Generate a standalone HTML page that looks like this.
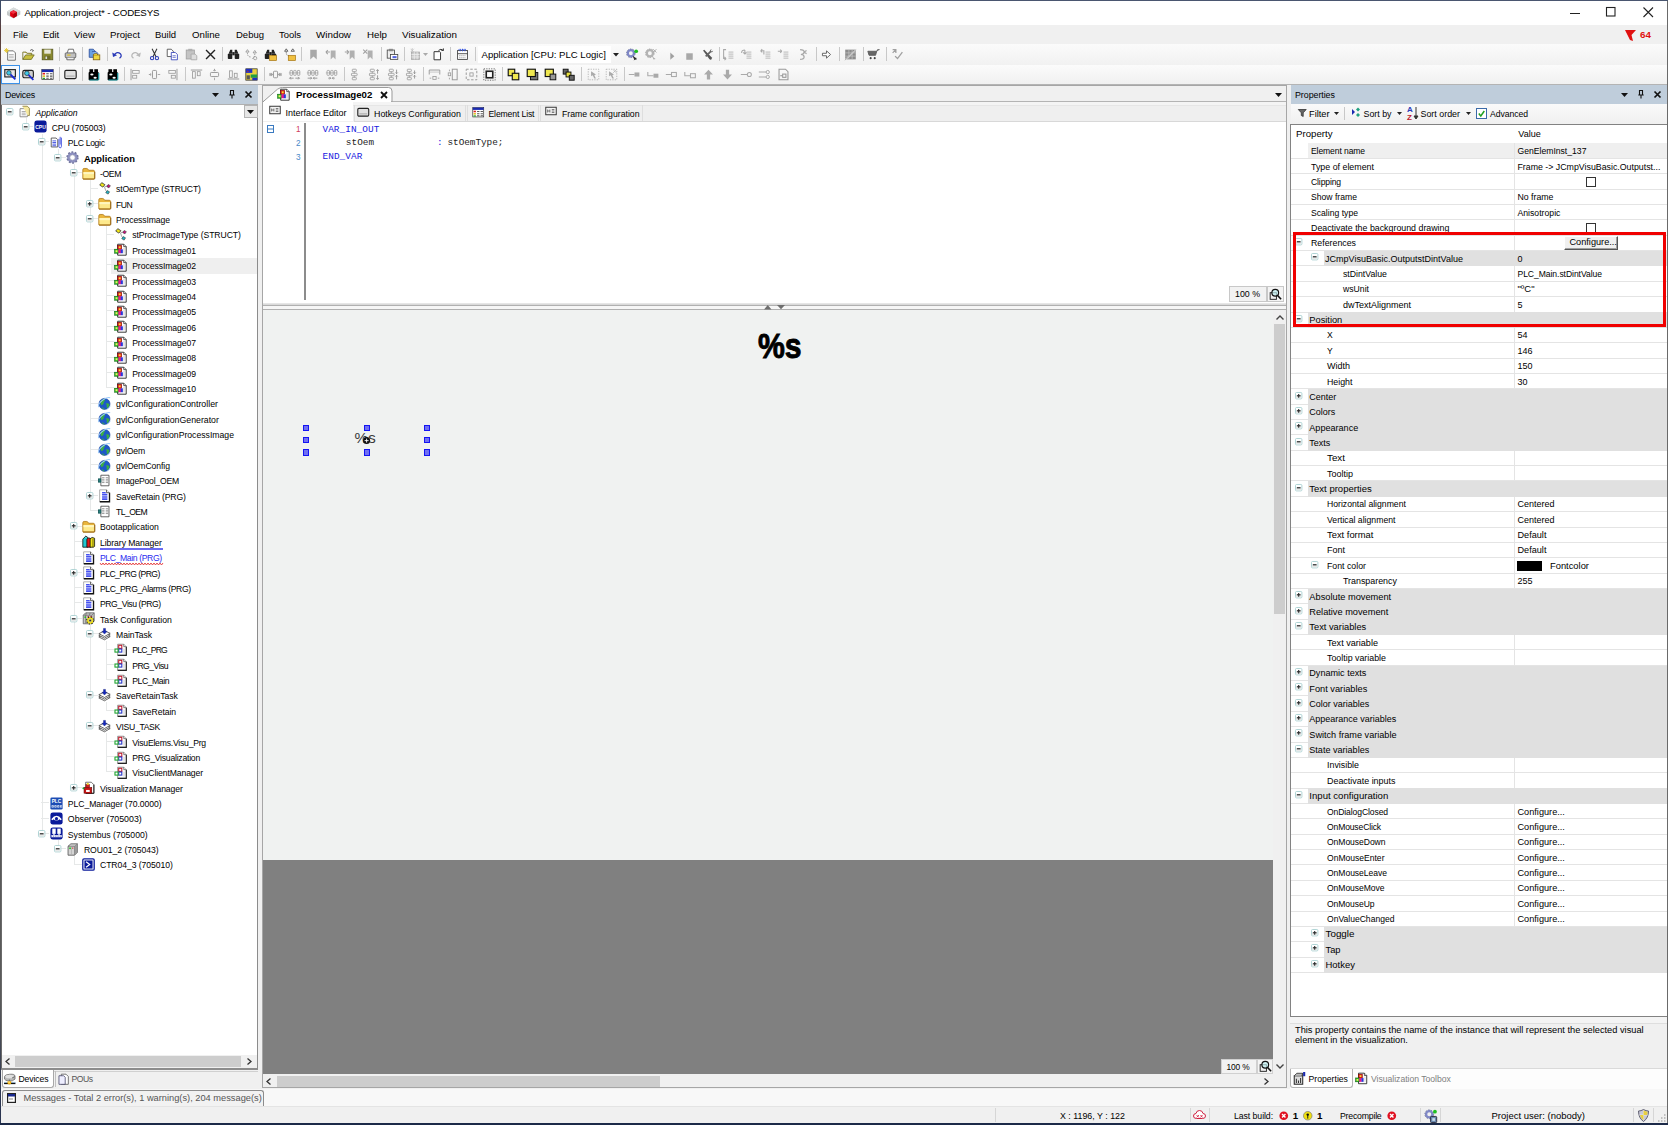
<!DOCTYPE html>
<html lang="en"><head><meta charset="utf-8"><title>Application.project* - CODESYS</title>
<style>
html,body{margin:0;padding:0;}
body{width:1668px;height:1125px;overflow:hidden;position:relative;background:#f0f0f0;font-family:"Liberation Sans",sans-serif;color:#000;}
.a{position:absolute;box-sizing:border-box;}
.t{position:absolute;white-space:pre;line-height:16px;height:16px;font-size:10.4px;}
.m{font-family:"Liberation Mono",monospace;}
svg{overflow:visible;}
</style></head>
<body>
<div class="a" style="left:0px;top:0px;width:1668px;height:1125px;background:#f0f0f0;"></div>
<div class="a" style="left:0px;top:1px;width:1668px;height:24px;background:#ffffff;"></div>
<div class="a" style="left:0px;top:25px;width:1668px;height:19px;background:#f0f0f0;"></div>
<div class="a" style="left:0px;top:44px;width:1668px;height:21px;background:linear-gradient(#fbfbfb,#f1f1f1);"></div>
<div class="a" style="left:0px;top:65px;width:1668px;height:19.5px;background:linear-gradient(#fbfbfb,#f0f0f0);"></div>
<div class="a" style="left:0px;top:84.3px;width:1668px;height:1px;background:#b4b4b4;"></div>
<svg class="a" style="left:7px;top:6.5px;" width="13.5" height="11.5" viewBox="0 0 13.500 11.500"><path d="M0 4.500l6.500-4 6.800 3.500v3.500l-6.800 4-6.500-3.500z" fill="#c4c8c8"/><path d="M0 4.500l6.500-4 6.800 3.500-6.800 3.700z" fill="#d8dcdc"/><path d="M6.500 3.300l3.400 1.800v3.800l-3.400 2-3.400-2v-3.800z" fill="#e00010"/><path d="M6.500 3.300l3.400 1.800-3.400 1.900-3.400-1.900z" fill="#f03040"/><path d="M6.500 7v3.900l3.400-2v-3.800z" fill="#b00008"/></svg>
<span class="t " style="left:24.5px;top:5px;font-size:9.74px;letter-spacing:-0.157px;">Application.project* - CODESYS</span>
<svg class="a" style="left:1568.5px;top:7px;" width="12" height="12" viewBox="0 0 12 12"><path d="M1 6.500h10" stroke="#222" stroke-width="1"/></svg>
<svg class="a" style="left:1606px;top:7px;" width="10" height="10" viewBox="0 0 10 10"><rect x=".5" y=".5" width="8.500" height="8.500" fill="none" stroke="#222" stroke-width="1.100"/></svg>
<svg class="a" style="left:1643px;top:7px;" width="11" height="11" viewBox="0 0 11 11"><path d="M.5 .5l9.500 9.500M10 .5l-9.500 9.500" stroke="#222" stroke-width="1.100"/></svg>
<span class="t " style="left:13px;top:26.5px;font-size:9.49px;letter-spacing:-0.073px;">File</span>
<span class="t " style="left:43px;top:26.5px;font-size:9.49px;letter-spacing:-0.089px;">Edit</span>
<span class="t " style="left:74px;top:26.5px;font-size:9.77px;letter-spacing:0.000px;">View</span>
<span class="t " style="left:110px;top:26.5px;font-size:9.64px;letter-spacing:0.000px;">Project</span>
<span class="t " style="left:155px;top:26.5px;font-size:9.49px;letter-spacing:-0.021px;">Build</span>
<span class="t " style="left:192px;top:26.5px;font-size:9.69px;letter-spacing:0.000px;">Online</span>
<span class="t " style="left:236px;top:26.5px;font-size:9.50px;letter-spacing:0.000px;">Debug</span>
<span class="t " style="left:279px;top:26.5px;font-size:9.49px;letter-spacing:-0.032px;">Tools</span>
<span class="t " style="left:316px;top:26.5px;font-size:9.84px;letter-spacing:0.000px;">Window</span>
<span class="t " style="left:367px;top:26.5px;font-size:9.72px;letter-spacing:0.000px;">Help</span>
<span class="t " style="left:402px;top:26.5px;font-size:9.83px;letter-spacing:0.000px;">Visualization</span>
<svg class="a" style="left:1624px;top:29px;" width="13" height="13" viewBox="0 0 13 13"><path d="M1 1h11l-4.500 5 1.500 6-3-1z" fill="#e01010"/></svg>
<span class="t " style="left:1640px;top:26.5px;font-size:9.8px;letter-spacing:0.050px;color:#e01010;font-weight:bold;">64</span>
<svg class="a" style="left:3.5px;top:47.5px;" width="13" height="13" viewBox="0 0 16 16"><path d="M4.500 3.500h7l2.500 2.500v9h-9.500z" fill="#fff" stroke="#555"/><path d="M6 8h6M6 10h6M6 12h6" stroke="#aaa"/><path d="M3 0v6M0 3h6M1 1l4 4M5 1l-4 4" stroke="#e0c020" stroke-width="1"/></svg>
<svg class="a" style="left:22px;top:47.5px;" width="13" height="13" viewBox="0 0 16 16"><path d="M1 5h4l1 1.500h6v2" fill="#e8d060" stroke="#6a6a20"/><path d="M1 5v9h10.500l3.500-5.500h-10.500l-3.500 5.500" fill="#c8c040" stroke="#6a6a20"/><path d="M10 3q2-2 4 0l-1 1.500" fill="none" stroke="#333"/></svg>
<svg class="a" style="left:40.5px;top:47.5px;" width="13" height="13" viewBox="0 0 16 16"><rect x="1.500" y="1.500" width="13" height="13" fill="#8a8a30" stroke="#5a5a20"/><rect x="4" y="2" width="8" height="5" fill="#e8e8d8"/><rect x="4.500" y="9.500" width="7" height="5" fill="#6a6a28"/><rect x="5.500" y="10.500" width="2" height="3" fill="#ddd"/></svg>
<div class="a" style="left:59px;top:47px;width:1px;height:14px;background:#c8c8c8;"></div>
<svg class="a" style="left:64px;top:47.5px;" width="13" height="13" viewBox="0 0 16 16"><path d="M4 6l1.500-4.500h6l1 4.500" fill="#fff" stroke="#555"/><rect x="1.500" y="6" width="13" height="6" rx="1" fill="#c0c0c0" stroke="#555"/><path d="M3.500 12v2.500h9v-2.500" fill="#eee" stroke="#555"/><rect x="4" y="8" width="4" height="1.500" fill="#e0c020"/></svg>
<div class="a" style="left:82px;top:47px;width:1px;height:14px;background:#c8c8c8;"></div>
<svg class="a" style="left:87.5px;top:47.5px;" width="13" height="13" viewBox="0 0 16 16"><path d="M1.500 1.500h5l2 2v8h-7z" fill="#6aa0e0" stroke="#2a4a9a"/><path d="M5 4.500h5l2 2v3" fill="#9ac0f0" stroke="#2a4a9a"/><rect x="6.500" y="8.500" width="8" height="6" fill="#f0d840" stroke="#806010"/><path d="M6.500 8.500l1.500-1.500h3l1 1.500" fill="#f0d840" stroke="#806010"/></svg>
<div class="a" style="left:107px;top:47px;width:1px;height:14px;background:#c8c8c8;"></div>
<svg class="a" style="left:110.5px;top:47.5px;" width="13" height="13" viewBox="0 0 16 16"><path d="M3.500 9q4-5.500 8-2 2.500 3-1 5.500" fill="none" stroke="#2a3ab8" stroke-width="1.600"/><path d="M1.500 5.500l1 5.500 5-2z" fill="#2a3ab8"/></svg>
<svg class="a" style="left:129px;top:47.5px;" width="13" height="13" viewBox="0 0 16 16"><path d="M12.500 9q-4-5.500-8-2-2.500 3 1 5.500" fill="none" stroke="#b8b8b8" stroke-width="1.600"/><path d="M14.500 5.500l-1 5.500-5-2z" fill="#b8b8b8"/></svg>
<svg class="a" style="left:147.5px;top:47.5px;" width="13" height="13" viewBox="0 0 16 16"><path d="M5 1l5 10M11 1l-5 10" stroke="#333" stroke-width="1.300"/><circle cx="5" cy="12.500" r="2" fill="none" stroke="#2a3ab8" stroke-width="1.300"/><circle cx="11" cy="12.500" r="2" fill="none" stroke="#2a3ab8" stroke-width="1.300"/></svg>
<svg class="a" style="left:166px;top:47.5px;" width="13" height="13" viewBox="0 0 16 16"><path d="M1.500 1.500h5l2.500 2.500v6.500h-7.500z" fill="#fff" stroke="#444"/><path d="M6.500 5.500h5l2.500 2.500v6.500h-7.500z" fill="#fff" stroke="#2a3ab8"/><path d="M8 9.500h4M8 11.500h4" stroke="#2a3ab8" stroke-width=".8"/></svg>
<svg class="a" style="left:184.5px;top:47.5px;" width="13" height="13" viewBox="0 0 16 16"><rect x="1.500" y="2.500" width="10" height="11" fill="#c4c4c4" stroke="#a0a0a0"/><rect x="4" y="1" width="5" height="3" fill="#b0b0b0"/><path d="M7.500 7.500h5l2 2v5h-7z" fill="#ddd" stroke="#a8a8a8"/></svg>
<svg class="a" style="left:203.5px;top:47.5px;" width="13" height="13" viewBox="0 0 16 16"><path d="M2.500 2.500l11 11M13.500 2.500l-11 11" stroke="#222" stroke-width="1.700"/></svg>
<div class="a" style="left:221.5px;top:47px;width:1px;height:14px;background:#c8c8c8;"></div>
<svg class="a" style="left:226.5px;top:47.5px;" width="13" height="13" viewBox="0 0 16 16"><path d="M2 7l2-5h2.500v5zM14 7l-2-5h-2.500v5z" fill="#222"/><rect x="1" y="7" width="5.500" height="6.500" rx="1" fill="#222"/><rect x="9.500" y="7" width="5.500" height="6.500" rx="1" fill="#222"/><rect x="6.500" y="5" width="3" height="4" fill="#222"/></svg>
<svg class="a" style="left:245px;top:47.5px;" width="13" height="13" viewBox="0 0 16 16"><path d="M3 2l2 3h-4zM12 3l2 3h-4z" fill="none" stroke="#888" stroke-width=".9"/><path d="M3 6q0 5 4 5M12 7q0 5-3 6" fill="none" stroke="#777" stroke-dasharray="1.500 1.200"/><circle cx="12.500" cy="12.500" r="2" fill="none" stroke="#999"/></svg>
<svg class="a" style="left:263.5px;top:47.5px;" width="13" height="13" viewBox="0 0 16 16"><path d="M2 7l2-5h2.500v5zM14 7l-2-5h-2.500v5z" fill="#222"/><rect x="1" y="7" width="5.500" height="6.500" rx="1" fill="#222"/><rect x="9.500" y="7" width="5.500" height="6.500" rx="1" fill="#222"/><rect x="6.500" y="5" width="3" height="4" fill="#222"/><rect x="6.500" y="9" width="9" height="6.500" fill="#f0c040" stroke="#a07010" stroke-width=".8"/></svg>
<svg class="a" style="left:282.5px;top:47.5px;" width="13" height="13" viewBox="0 0 16 16"><path d="M4 1l2 3h-4zM12 1l2 3h-4z" fill="#fff" stroke="#333" stroke-width=".9"/><path d="M4 5q0 5 4 5" fill="none" stroke="#555" stroke-dasharray="1.500 1.200"/><rect x="6.500" y="9" width="9" height="6.500" fill="#f0c040" stroke="#a07010" stroke-width=".8"/></svg>
<div class="a" style="left:301px;top:47px;width:1px;height:14px;background:#c8c8c8;"></div>
<svg class="a" style="left:306.5px;top:47.5px;" width="13" height="13" viewBox="0 0 16 16"><path d="M4 2h8v12l-4-3.500-4 3.500z" fill="#a8a8a8"/></svg>
<svg class="a" style="left:325px;top:47.5px;" width="13" height="13" viewBox="0 0 16 16"><path d="M7 3h6v11l-3-3-3 3z" fill="#b0b0b0"/><path d="M1 5h5M1 5l2.500-2.500M1 5l2.500 2.500" stroke="#a0a0a0" stroke-width="1.300" fill="none"/></svg>
<svg class="a" style="left:343.5px;top:47.5px;" width="13" height="13" viewBox="0 0 16 16"><path d="M7 3h6v11l-3-3-3 3z" fill="#b0b0b0"/><path d="M1 5h5M6 5l-2.500-2.500M6 5l-2.500 2.500" stroke="#a0a0a0" stroke-width="1.300" fill="none"/></svg>
<svg class="a" style="left:362px;top:47.5px;" width="13" height="13" viewBox="0 0 16 16"><path d="M7 3h6v11l-3-3-3 3z" fill="#b0b0b0"/><path d="M1.500 2l5 5M6.500 2l-5 5" stroke="#a0a0a0" stroke-width="1.300"/></svg>
<div class="a" style="left:381px;top:47px;width:1px;height:14px;background:#c8c8c8;"></div>
<svg class="a" style="left:385.5px;top:47.5px;" width="13" height="13" viewBox="0 0 16 16"><rect x="1.500" y="2.500" width="9" height="10" fill="#eee" stroke="#444"/><rect x="3.500" y="1" width="5" height="3" fill="#888"/><rect x="5.500" y="8" width="9" height="6" fill="#fff" stroke="#444"/><rect x="8" y="10" width="5" height="2.500" fill="#5060e0"/></svg>
<div class="a" style="left:404px;top:47px;width:1px;height:14px;background:#c8c8c8;"></div>
<svg class="a" style="left:408.5px;top:47.5px;" width="13" height="13" viewBox="0 0 16 16"><rect x="3" y="5" width="10" height="9" fill="#c8c8c8" stroke="#aaa"/><path d="M3 8h10M3 11h10M6.500 5v9M10 5v9" stroke="#eee"/><path d="M2 1l4 4M6 1l-4 4M4 0v5" stroke="#bbb" stroke-width=".8"/></svg>
<svg class="a" style="left:431.5px;top:47.5px;" width="13" height="13" viewBox="0 0 16 16"><path d="M2.500 4.500h7l1 1v9h-8z" fill="#fff" stroke="#333" stroke-width="1.200"/><path d="M8 3q3-3 6 0M14 3v-2.500M14 3h-2.500" fill="none" stroke="#333" stroke-width="1.200"/></svg>
<div class="a" style="left:450px;top:47px;width:1px;height:14px;background:#c8c8c8;"></div>
<svg class="a" style="left:455.5px;top:47.5px;" width="13" height="13" viewBox="0 0 16 16"><rect x="2" y="3" width="12" height="11" fill="#fff" stroke="#333"/><path d="M2 7h12" stroke="#333"/><path d="M4 9.500h8M4 12h8" stroke="#888" stroke-dasharray="1.500 1"/><path d="M5 1v3M8 1v3M11 1v3" stroke="#3050e0" stroke-width="1.200"/><path d="M3 2h10" stroke="#3050e0" stroke-dasharray="1 1"/></svg>
<div class="a" style="left:475px;top:47px;width:1px;height:14px;background:#c8c8c8;"></div>
<svg class="a" style="left:625.5px;top:47.5px;" width="13" height="13" viewBox="0 0 16 16"><circle cx="6" cy="6.500" r="3.800" fill="none" stroke="#8088c8" stroke-width="2.800"/><circle cx="6" cy="6.500" r="5.300" fill="none" stroke="#70789c" stroke-width="1.200" stroke-dasharray="1.800 1.500"/><circle cx="12.500" cy="4" r="2.300" fill="#20c020"/><path d="M9 10.500l4 3-2.500.5zM12 12l-2 3" stroke="#222" fill="#222" stroke-width=".8"/></svg>
<svg class="a" style="left:644.5px;top:47.5px;" width="13" height="13" viewBox="0 0 16 16"><circle cx="6" cy="6.500" r="3.800" fill="none" stroke="#b4b4b4" stroke-width="2.800"/><circle cx="6" cy="6.500" r="5.300" fill="none" stroke="#a8a8a8" stroke-width="1.200" stroke-dasharray="1.800 1.500"/><path d="M10 1.500l4 4M14 1.500l-4 4" stroke="#aaa" stroke-width="1.200"/><path d="M9 10.500l4 3-2.500.5z" fill="#aaa"/></svg>
<svg class="a" style="left:664.5px;top:47.5px;" width="13" height="13" viewBox="0 0 16 16"><path d="M6.500 5.500l5 4.500-5 4.500z" fill="#a0a0a0"/></svg>
<svg class="a" style="left:682.5px;top:47.5px;" width="13" height="13" viewBox="0 0 16 16"><rect x="4" y="6.500" width="8" height="8" fill="#a8a8a8"/></svg>
<svg class="a" style="left:700.5px;top:47.5px;" width="13" height="13" viewBox="0 0 16 16"><path d="M2.500 3l1.500-1 9 9.500q1 1.500-.3 2.500t-2.500-.5z" fill="#555"/><path d="M13.500 1.500q-2.500 0-2.800 2.500l-5.700 5.500 1.500 1.500 5.700-5.500q2.500 0 2.800-2.500l-1.800 1.200-1.200-1.200z" fill="#666"/></svg>
<div class="a" style="left:718.5px;top:47px;width:1px;height:14px;background:#c8c8c8;"></div>
<svg class="a" style="left:721.5px;top:47.5px;" width="13" height="13" viewBox="0 0 16 16"><path d="M8 5h6M8 7.500h6M8 10h6M8 12.500h6" stroke="#b8b8b8" stroke-width="1.200"/><path d="M5 2h-3v11h3M5 13l-2-2M5 13l-2 2" fill="none" stroke="#a8a8a8" stroke-width="1.300"/></svg>
<svg class="a" style="left:740px;top:47.5px;" width="13" height="13" viewBox="0 0 16 16"><path d="M8 5h6M8 7.500h6M8 10h6M8 12.500h6" stroke="#b8b8b8" stroke-width="1.200"/><path d="M2 6q0-3.500 4-3.500M6 2.500v5M6 7.500l-2-2M6 7.500l2-2" fill="none" stroke="#a8a8a8" stroke-width="1.300"/></svg>
<svg class="a" style="left:758.5px;top:47.5px;" width="13" height="13" viewBox="0 0 16 16"><path d="M8 5h6M8 7.500h6M8 10h6M8 12.500h6" stroke="#b8b8b8" stroke-width="1.200"/><path d="M6 8v-4.500h-4M2 3.500l2-2M2 3.500l2 2" fill="none" stroke="#a8a8a8" stroke-width="1.300"/></svg>
<svg class="a" style="left:777px;top:47.5px;" width="13" height="13" viewBox="0 0 16 16"><path d="M8 5h6M8 7.500h6M8 10h6M8 12.500h6" stroke="#b8b8b8" stroke-width="1.200"/><path d="M1 4h5M6 4l-2-2M6 4l-2 2" fill="none" stroke="#a8a8a8" stroke-width="1.300"/></svg>
<svg class="a" style="left:795.5px;top:47.5px;" width="13" height="13" viewBox="0 0 16 16"><path d="M5 2q5 0 5 3t-4 3q4 0 4 3t-5 3M10 5l3-2M10 5l3 2" fill="none" stroke="#a8a8a8" stroke-width="1.500"/></svg>
<div class="a" style="left:816px;top:47px;width:1px;height:14px;background:#c8c8c8;"></div>
<svg class="a" style="left:819.5px;top:47.5px;" width="13" height="13" viewBox="0 0 16 16"><path d="M3 6.500h5v-3l5 4.500-5 4.500v-3h-5z" fill="#fff" stroke="#666" stroke-width="1.200"/></svg>
<div class="a" style="left:839px;top:47px;width:1px;height:14px;background:#c8c8c8;"></div>
<svg class="a" style="left:844px;top:47.5px;" width="13" height="13" viewBox="0 0 16 16"><rect x="1.500" y="2" width="13" height="12" fill="#8c8c8c"/><path d="M1.500 6h13M1.500 10h13M6 2v12M10 2v12" stroke="#c8c8c8" stroke-width=".8"/><path d="M1 15l14-13" stroke="#eee" stroke-width="1.500"/><path d="M1 15l14-13" stroke="#777" stroke-width=".6"/></svg>
<div class="a" style="left:863px;top:47px;width:1px;height:14px;background:#c8c8c8;"></div>
<svg class="a" style="left:867px;top:47.5px;" width="13" height="13" viewBox="0 0 16 16"><path d="M1 4h11l-1.500 5h-8zM12 4l1-2h2.500" fill="#666" stroke="#555"/><circle cx="4.500" cy="12.500" r="1.300" fill="#444"/><circle cx="9.500" cy="12.500" r="1.300" fill="#444"/></svg>
<div class="a" style="left:886px;top:47px;width:1px;height:14px;background:#c8c8c8;"></div>
<svg class="a" style="left:891px;top:47.5px;" width="13" height="13" viewBox="0 0 16 16"><path d="M2 2h4v4M6 2l-4 4" fill="none" stroke="#a0a0a0" stroke-width="1.500"/><path d="M5 10l3 3 6-8" fill="none" stroke="#a0a0a0" stroke-width="1.600"/></svg>
<svg class="a" style="left:422.5px;top:53px;" width="5" height="3" viewBox="0 0 5 3"><path d="M0 0h5l-2.500 3z" fill="#aaa"/></svg>
<div class="a" style="left:478px;top:46px;width:133px;height:17px;background:#ffffff;"></div>
<span class="t " style="left:481.5px;top:46.5px;font-size:9.57px;letter-spacing:0.000px;">Application [CPU: PLC Logic]</span>
<svg class="a" style="left:613px;top:53px;" width="6" height="3.5" viewBox="0 0 6 3.500"><path d="M0 0h6l-3 3.500z" fill="#222"/></svg>
<div class="a" style="left:1px;top:65px;width:18.5px;height:18.5px;background:#f4f9ff;border:1.500px solid #3a90e8;"></div>
<svg class="a" style="left:3.5px;top:67.5px;" width="13" height="13" viewBox="0 0 16 16"><rect x="1" y="2" width="13" height="9" fill="#e8e8e8" stroke="#222" stroke-width="1.400"/><circle cx="6" cy="6" r="2.800" fill="#40c8e8" stroke="#222" stroke-width=".8"/><path d="M8 8l6 6" stroke="#1a2ad0" stroke-width="2.200"/></svg>
<svg class="a" style="left:22px;top:67.5px;" width="13" height="13" viewBox="0 0 16 16"><rect x="1" y="3" width="13" height="9" rx="2" fill="#d0d0d0" stroke="#222" stroke-width="1.400"/><circle cx="6" cy="6.500" r="2.800" fill="#40c8e8" stroke="#222" stroke-width=".8"/><path d="M8 8.500l6 6" stroke="#1a2ad0" stroke-width="2.200"/></svg>
<svg class="a" style="left:40.5px;top:67.5px;" width="13" height="13" viewBox="0 0 16 16"><rect x="1" y="2" width="14" height="12" fill="#fff" stroke="#222" stroke-width=".8"/><rect x="1" y="2" width="14" height="3" fill="#1a2ab0"/><rect x="2" y="6" width="3" height="2" fill="#e02020"/><rect x="2" y="9" width="3" height="2" fill="#e0c020"/><rect x="2" y="12" width="3" height="1.500" fill="#20a020"/><path d="M6.500 7h3M11 7h3M6.500 10h3M11 10h3M6.500 12.500h3M11 12.500h3" stroke="#555" stroke-width="1.300"/></svg>
<div class="a" style="left:59px;top:67px;width:1px;height:14px;background:#c8c8c8;"></div>
<svg class="a" style="left:64px;top:67.5px;" width="13" height="13" viewBox="0 0 16 16"><rect x="1" y="3" width="14" height="10" rx="1.500" fill="#e0e0e0" stroke="#222" stroke-width="1.400"/><rect x="3" y="9" width="10" height="2" fill="#bbb"/></svg>
<div class="a" style="left:82px;top:67px;width:1px;height:14px;background:#c8c8c8;"></div>
<svg class="a" style="left:87px;top:67.5px;" width="13" height="13" viewBox="0 0 16 16"><rect x="3" y="1.500" width="4.500" height="4" fill="#000"/><rect x="9" y="1.500" width="4.500" height="4" fill="#000"/><rect x="2" y="5" width="12.500" height="10" rx="1" fill="#000"/><ellipse cx="6" cy="8" rx="2" ry="1.300" fill="#fff"/><ellipse cx="10" cy="12" rx="2" ry="1.300" fill="#fff"/><path d="M14.500 6v8.500M3 14.800h11" stroke="#18a0a8" stroke-width="1.400"/></svg>
<svg class="a" style="left:105.5px;top:67.5px;" width="13" height="13" viewBox="0 0 16 16"><rect x="3" y="1.500" width="4.500" height="4" fill="#000"/><rect x="9" y="1.500" width="4.500" height="4" fill="#000"/><rect x="2" y="5" width="12.500" height="10" rx="1" fill="#000"/><ellipse cx="6" cy="8" rx="2" ry="1.300" fill="#fff"/><ellipse cx="10" cy="12" rx="2" ry="1.300" fill="#fff"/><path d="M14.500 6v8.500M3 14.800h11" stroke="#18a0a8" stroke-width="1.400"/></svg>
<div class="a" style="left:124px;top:67px;width:1px;height:14px;background:#c8c8c8;"></div>
<svg class="a" style="left:129px;top:67.5px;" width="13" height="13" viewBox="0 0 16 16"><path d="M2.500 1v14" stroke="#999" stroke-width="1.200"/><rect x="4.500" y="3" width="8" height="3.500" fill="none" stroke="#999"/><rect x="4.500" y="9" width="5" height="3.500" fill="none" stroke="#999"/></svg>
<svg class="a" style="left:147.5px;top:67.5px;" width="13" height="13" viewBox="0 0 16 16"><path d="M1 8h3M12 8h3M2 8l1.500-1.500M2 8l1.500 1.500" stroke="#999" stroke-width="1"/><rect x="5.500" y="3" width="5" height="10" rx="1" fill="none" stroke="#999" stroke-width="1.200"/></svg>
<svg class="a" style="left:166px;top:67.5px;" width="13" height="13" viewBox="0 0 16 16"><path d="M13.500 1v14" stroke="#999" stroke-width="1.200"/><rect x="3.500" y="3" width="8" height="3.500" fill="none" stroke="#999"/><rect x="6.500" y="9" width="5" height="3.500" fill="none" stroke="#999"/></svg>
<div class="a" style="left:185px;top:67px;width:1px;height:14px;background:#c8c8c8;"></div>
<svg class="a" style="left:189.5px;top:67.5px;" width="13" height="13" viewBox="0 0 16 16"><path d="M1 2.500h14" stroke="#999" stroke-width="1.200"/><rect x="3" y="4.500" width="3.500" height="8" fill="none" stroke="#999"/><rect x="9" y="4.500" width="3.500" height="5" fill="none" stroke="#999"/></svg>
<svg class="a" style="left:208px;top:67.5px;" width="13" height="13" viewBox="0 0 16 16"><path d="M8 1v3M8 12v3M8 2l-1.500 1.500M8 2l1.500 1.500" stroke="#999"/><rect x="3" y="5.500" width="10" height="5" rx="1" fill="none" stroke="#999" stroke-width="1.200"/></svg>
<svg class="a" style="left:226.5px;top:67.5px;" width="13" height="13" viewBox="0 0 16 16"><path d="M1 13.500h14" stroke="#999" stroke-width="1.200"/><rect x="3" y="3.500" width="3.500" height="8" fill="none" stroke="#999"/><rect x="9" y="6.500" width="3.500" height="5" fill="none" stroke="#999"/></svg>
<svg class="a" style="left:245px;top:67.5px;" width="13" height="13" viewBox="0 0 16 16"><rect x="1" y="1" width="14" height="14" fill="#e8d040" stroke="#222" stroke-width=".8"/><rect x="1" y="1" width="8" height="5" fill="#2030c0"/><rect x="7" y="8" width="8" height="4" fill="#20a040"/><rect x="2" y="9" width="4" height="5" fill="#555"/><rect x="9" y="12" width="6" height="3" fill="#2030c0"/><path d="M3 3l2 1-2 1z" fill="#e02020"/></svg>
<div class="a" style="left:264px;top:67px;width:1px;height:14px;background:#c8c8c8;"></div>
<svg class="a" style="left:269px;top:67.5px;" width="13" height="13" viewBox="0 0 16 16"><path d="M1 8h4M11 8h4" stroke="#999"/><rect x="5.500" y="4" width="5" height="8" rx="1" fill="none" stroke="#999" stroke-width="1.200"/><rect x="1" y="6.500" width="2.500" height="3" fill="none" stroke="#999" stroke-width=".8"/><rect x="12.500" y="6.500" width="2.500" height="3" fill="none" stroke="#999" stroke-width=".8"/></svg>
<svg class="a" style="left:287.5px;top:67.5px;" width="13" height="13" viewBox="0 0 16 16"><rect x="2.5" y="3" width="3" height="6" rx=".8" fill="none" stroke="#9a9a9a" stroke-width="1"/><rect x="7" y="3" width="3" height="6" rx=".8" fill="none" stroke="#9a9a9a" stroke-width="1"/><rect x="11.5" y="3" width="3" height="6" rx=".8" fill="none" stroke="#9a9a9a" stroke-width="1"/><path d="M1 6h14" stroke="#9a9a9a" stroke-width=".7"/><path d="M2 12.500h5M9 12.500h5M2 12.500l1.500-1.500M2 12.500l1.500 1.500M14 12.500l-1.500-1.500M14 12.500l-1.500 1.500" stroke="#888" fill="none"/></svg>
<svg class="a" style="left:306px;top:67.5px;" width="13" height="13" viewBox="0 0 16 16"><rect x="2.5" y="3" width="3" height="6" rx=".8" fill="none" stroke="#9a9a9a" stroke-width="1"/><rect x="7" y="3" width="3" height="6" rx=".8" fill="none" stroke="#9a9a9a" stroke-width="1"/><rect x="11.5" y="3" width="3" height="6" rx=".8" fill="none" stroke="#9a9a9a" stroke-width="1"/><path d="M1 6h14" stroke="#9a9a9a" stroke-width=".7"/><path d="M2 12.500h5M9 12.500h5M7 12.500l-1.500-1.500M7 12.500l-1.500 1.500M9 12.500l1.500-1.500M9 12.500l1.500 1.500" stroke="#888" fill="none"/></svg>
<svg class="a" style="left:324.5px;top:67.5px;" width="13" height="13" viewBox="0 0 16 16"><rect x="2.5" y="3" width="3" height="6" rx=".8" fill="none" stroke="#9a9a9a" stroke-width="1"/><rect x="7" y="3" width="3" height="6" rx=".8" fill="none" stroke="#9a9a9a" stroke-width="1"/><rect x="11.5" y="3" width="3" height="6" rx=".8" fill="none" stroke="#9a9a9a" stroke-width="1"/><path d="M1 6h14" stroke="#9a9a9a" stroke-width=".7"/><path d="M4 12.500h3M9 12.500h3M7 12.500l-1.500-1.500M7 12.500l-1.500 1.500M9 12.500l1.500-1.500M9 12.500l1.500 1.500" stroke="#888" fill="none"/></svg>
<div class="a" style="left:343.5px;top:67px;width:1px;height:14px;background:#c8c8c8;"></div>
<svg class="a" style="left:348.5px;top:67.5px;" width="13" height="13" viewBox="0 0 16 16"><rect x="4" y="1.500" width="5" height="3" rx=".8" fill="none" stroke="#999"/><rect x="3" y="6.500" width="7" height="3" rx=".8" fill="none" stroke="#999"/><rect x="4" y="11.500" width="5" height="3" rx=".8" fill="none" stroke="#999"/><path d="M6.500 4.500v2M6.500 9.500v2" stroke="#999"/></svg>
<svg class="a" style="left:367px;top:67.5px;" width="13" height="13" viewBox="0 0 16 16"><rect x="4" y="1.500" width="5" height="3" rx=".8" fill="none" stroke="#999"/><rect x="3" y="6.500" width="7" height="3" rx=".8" fill="none" stroke="#999"/><rect x="4" y="11.500" width="5" height="3" rx=".8" fill="none" stroke="#999"/><path d="M6.500 4.500v2M6.500 9.500v2" stroke="#999"/><path d="M13 2v5M13 9v5M13 2l-1.500 1.500M13 2l1.500 1.500M13 14l-1.500-1.500M13 14l1.500-1.500" stroke="#888" fill="none"/></svg>
<svg class="a" style="left:385.5px;top:67.5px;" width="13" height="13" viewBox="0 0 16 16"><rect x="4" y="1.500" width="5" height="3" rx=".8" fill="none" stroke="#999"/><rect x="3" y="6.500" width="7" height="3" rx=".8" fill="none" stroke="#999"/><rect x="4" y="11.500" width="5" height="3" rx=".8" fill="none" stroke="#999"/><path d="M6.500 4.500v2M6.500 9.500v2" stroke="#999"/><path d="M13 2v5M13 9v5M13 7l-1.500-1.500M13 7l1.500-1.500M13 9l-1.500 1.500M13 9l1.500 1.500" stroke="#888" fill="none"/></svg>
<svg class="a" style="left:404px;top:67.5px;" width="13" height="13" viewBox="0 0 16 16"><rect x="4" y="1.500" width="5" height="3" rx=".8" fill="none" stroke="#999"/><rect x="3" y="6.500" width="7" height="3" rx=".8" fill="none" stroke="#999"/><rect x="4" y="11.500" width="5" height="3" rx=".8" fill="none" stroke="#999"/><path d="M6.500 4.500v2M6.500 9.500v2" stroke="#999"/><path d="M13 3v4M13 9v4M13 7l-1.500-1.500M13 7l1.500-1.500M13 9l-1.500 1.500M13 9l1.500 1.500" stroke="#888" fill="none"/></svg>
<div class="a" style="left:423px;top:67px;width:1px;height:14px;background:#c8c8c8;"></div>
<svg class="a" style="left:428px;top:67.5px;" width="13" height="13" viewBox="0 0 16 16"><path d="M1.500 8v-5.500h13v5.500" fill="none" stroke="#999" stroke-width="1.200"/><path d="M1.500 5h13" stroke="#bbb"/><rect x="6" y="10.500" width="4" height="3.500" fill="none" stroke="#999"/><path d="M2 12.500h2M12 12.500h2" stroke="#999"/></svg>
<svg class="a" style="left:446.5px;top:67.5px;" width="13" height="13" viewBox="0 0 16 16"><rect x="6.500" y="1.500" width="6" height="13" fill="none" stroke="#999" stroke-width="1.200"/><rect x="1.500" y="6" width="3" height="3.500" fill="none" stroke="#999"/><path d="M3 2v2M3 12v2" stroke="#999"/></svg>
<svg class="a" style="left:464.5px;top:67.5px;" width="13" height="13" viewBox="0 0 16 16"><rect x="1.500" y="1.500" width="13" height="13" fill="none" stroke="#999" stroke-width="1.200" stroke-dasharray="3 2"/><rect x="6" y="6" width="4" height="4" fill="none" stroke="#999"/></svg>
<svg class="a" style="left:483px;top:67.5px;" width="13" height="13" viewBox="0 0 16 16"><rect x="4" y="4" width="8" height="8" fill="#fff" stroke="#222" stroke-width="2"/><path d="M1 1h14v14h-14z" fill="none" stroke="#555" stroke-width="1" stroke-dasharray="1.500 1.500"/></svg>
<div class="a" style="left:502px;top:67px;width:1px;height:14px;background:#c8c8c8;"></div>
<svg class="a" style="left:507px;top:67.5px;" width="13" height="13" viewBox="0 0 16 16"><rect x="1.500" y="1.500" width="8" height="8" fill="#f0e850" stroke="#111" stroke-width="1.400"/><rect x="6.500" y="6.500" width="8" height="8" fill="#f0e850" stroke="#111" stroke-width="1.400"/></svg>
<svg class="a" style="left:525.5px;top:67.5px;" width="13" height="13" viewBox="0 0 16 16"><rect x="5.500" y="5.500" width="9" height="9" fill="#777" stroke="#111" stroke-width="1.200"/><rect x="1.500" y="1.500" width="10" height="9" fill="#f0e850" stroke="#111" stroke-width="1.400"/></svg>
<svg class="a" style="left:543.5px;top:67.5px;" width="13" height="13" viewBox="0 0 16 16"><rect x="1.500" y="1.500" width="10" height="9" fill="#f0e850" stroke="#111" stroke-width="1.400"/><rect x="7.500" y="7.500" width="7" height="7" fill="#999" stroke="#111" stroke-width="1.200"/></svg>
<svg class="a" style="left:562px;top:67.5px;" width="13" height="13" viewBox="0 0 16 16"><rect x="1.500" y="1.500" width="6" height="6" fill="#666" stroke="#111" stroke-width="1.200"/><rect x="5" y="5" width="6" height="6" fill="#e8e040" stroke="#111" stroke-width="1.200"/><rect x="9" y="9" width="6" height="6" fill="#666" stroke="#111" stroke-width="1.200"/></svg>
<div class="a" style="left:581px;top:67px;width:1px;height:14px;background:#c8c8c8;"></div>
<svg class="a" style="left:586.5px;top:67.5px;" width="13" height="13" viewBox="0 0 16 16"><rect x="1.500" y="1.500" width="13" height="13" fill="none" stroke="#aaa" stroke-dasharray="1.500 1.500"/><path d="M5 4l6 4-2 1 2 4h-2l-2-4-2 1z" fill="#aaa"/></svg>
<svg class="a" style="left:605px;top:67.5px;" width="13" height="13" viewBox="0 0 16 16"><rect x="1.500" y="1.500" width="13" height="13" fill="none" stroke="#aaa" stroke-dasharray="1.500 1.500"/><path d="M5 4l6 4-2 1 2 4h-2l-2-4-2 1z" fill="#aaa"/><path d="M10 2l4 4M14 2l-4 4" stroke="#aaa" stroke-width=".8"/></svg>
<div class="a" style="left:623.5px;top:67px;width:1px;height:14px;background:#c8c8c8;"></div>
<svg class="a" style="left:628px;top:67.5px;" width="13" height="13" viewBox="0 0 16 16"><path d="M1 8h7" stroke="#aaa" stroke-width="1.300"/><rect x="8" y="5.500" width="6" height="5" fill="#aaa"/></svg>
<svg class="a" style="left:646.5px;top:67.5px;" width="13" height="13" viewBox="0 0 16 16"><path d="M1 5v4.500h7" stroke="#aaa" stroke-width="1.300" fill="none"/><rect x="8" y="7" width="6" height="5" fill="#aaa"/></svg>
<svg class="a" style="left:665px;top:67.5px;" width="13" height="13" viewBox="0 0 16 16"><path d="M1 8h7" stroke="#aaa" stroke-width="1.300"/><rect x="8" y="5.500" width="6" height="5" fill="none" stroke="#aaa" stroke-width="1.300"/></svg>
<svg class="a" style="left:683.5px;top:67.5px;" width="13" height="13" viewBox="0 0 16 16"><path d="M1 5v4.500h7" stroke="#aaa" stroke-width="1.300" fill="none"/><rect x="8" y="7" width="6" height="5" fill="none" stroke="#aaa" stroke-width="1.300"/></svg>
<svg class="a" style="left:702px;top:67.5px;" width="13" height="13" viewBox="0 0 16 16"><path d="M8 2l5.500 6h-3.500v6h-4v-6h-3.500z" fill="#aaa"/></svg>
<svg class="a" style="left:720.5px;top:67.5px;" width="13" height="13" viewBox="0 0 16 16"><path d="M8 14l5.500-6h-3.500v-6h-4v6h-3.500z" fill="#aaa"/></svg>
<svg class="a" style="left:739.5px;top:67.5px;" width="13" height="13" viewBox="0 0 16 16"><path d="M1 8h8" stroke="#aaa" stroke-width="1.300"/><circle cx="11.500" cy="8" r="2.500" fill="none" stroke="#aaa" stroke-width="1.300"/></svg>
<svg class="a" style="left:758px;top:67.5px;" width="13" height="13" viewBox="0 0 16 16"><path d="M1 5h9M1 11h9" stroke="#aaa" stroke-width="1.300"/><circle cx="12" cy="5" r="2" fill="none" stroke="#aaa" stroke-width="1.200"/><circle cx="12" cy="11" r="2" fill="none" stroke="#aaa" stroke-width="1.200"/></svg>
<svg class="a" style="left:776.5px;top:67.5px;" width="13" height="13" viewBox="0 0 16 16"><path d="M2.500 1.500h8l3 3v10h-11z" fill="none" stroke="#999" stroke-width="1.300"/><rect x="7" y="7.500" width="4" height="4" fill="none" stroke="#999" stroke-width="1.300"/><path d="M4 9.500h3" stroke="#999" stroke-width="1.300"/></svg>
<div class="a" style="left:1px;top:85px;width:257px;height:19px;background:#bfcddb;"></div>
<span class="t " style="left:5px;top:86.5px;font-size:8.90px;letter-spacing:-0.238px;">Devices</span>
<svg class="a" style="left:211.5px;top:92.5px;" width="7" height="4" viewBox="0 0 7 4"><path d="M0 0h7l-3.500 4z" fill="#111"/></svg>
<svg class="a" style="left:228.5px;top:90px;" width="6" height="9" viewBox="0 0 6 9"><path d="M1.500 .5h3v4.500h-3zM.3 5h5.400M3 5v3.500" fill="none" stroke="#111" stroke-width="1.100"/></svg>
<svg class="a" style="left:244.5px;top:91px;" width="7" height="7" viewBox="0 0 7 7"><path d="M.5 .5l6 6M6.500 .5l-6 6" stroke="#111" stroke-width="1.700"/></svg>
<div class="a" style="left:1px;top:104px;width:257px;height:965px;background:#ffffff;border:1px solid #8c8c8c;border-top:none;border-left-color:#6a6a6a;"></div>
<div class="a" style="left:1px;top:104px;width:257px;height:0.7px;background:#b0b0b0;"></div>
<div class="a" style="left:243.5px;top:105px;width:14px;height:13px;background:#e6e6e6;border:1px solid #b4b4b4;"></div>
<svg class="a" style="left:247px;top:110px;" width="7" height="4" viewBox="0 0 7 4"><path d="M0 0h7l-3.500 4z" fill="#111"/></svg>
<div class="a" style="left:25.8px;top:118.2px;width:0;height:8.367px;border-left:1px solid #e6e8e8;"></div>
<div class="a" style="left:41.9px;top:133.567px;width:0;height:699.882px;border-left:1px solid #e6e8e8;"></div>
<div class="a" style="left:58px;top:148.934px;width:0;height:8.367px;border-left:1px solid #e6e8e8;"></div>
<div class="a" style="left:74.1px;top:164.301px;width:0;height:623.047px;border-left:1px solid #e6e8e8;"></div>
<div class="a" style="left:90.2px;top:179.668px;width:0;height:331.074px;border-left:1px solid #e6e8e8;"></div>
<div class="a" style="left:106.3px;top:225.769px;width:0;height:162.037px;border-left:1px solid #e6e8e8;"></div>
<div class="a" style="left:90.2px;top:625.311px;width:0;height:100.569px;border-left:1px solid #e6e8e8;"></div>
<div class="a" style="left:106.3px;top:640.678px;width:0;height:39.101px;border-left:1px solid #e6e8e8;"></div>
<div class="a" style="left:106.3px;top:702.146px;width:0;height:8.367px;border-left:1px solid #e6e8e8;"></div>
<div class="a" style="left:106.3px;top:732.88px;width:0;height:39.101px;border-left:1px solid #e6e8e8;"></div>
<div class="a" style="left:58px;top:840.449px;width:0;height:8.367px;border-left:1px solid #e6e8e8;"></div>
<div class="a" style="left:74.1px;top:855.816px;width:0;height:8.367px;border-left:1px solid #e6e8e8;"></div>
<svg class="a" style="left:5.5px;top:107.5px;" width="7.4" height="7.4" viewBox="0 0 9 9"><rect x=".6" y=".6" width="7.800" height="7.800" rx="1.300" fill="#fff" stroke="#a6cfd0" stroke-width="1.100"/><rect x="1.300" y="5.200" width="6.400" height="2.500" fill="#e6e8e8"/><path d="M2.200 4.600h4.600" stroke="#2a2a2a" stroke-width="1.500"/></svg>
<svg class="a" style="left:17.8px;top:105.1px;" width="13" height="13" viewBox="0 0 16 16"><path d="M2.5 4.5h7l2 2v8h-9z" fill="#fff" stroke="#777"/><path d="M5.5 1.5h6l2.500 2.500v9h-2" fill="#f6e9a0" stroke="#8a7a30"/><path d="M4.500 8h5M4.500 10h5M4.500 12h5" stroke="#999" stroke-width="1"/></svg>
<span class="t " style="left:35.6px;top:104.5px;font-size:8.65px;letter-spacing:-0.030px;font-style:italic;">Application</span>
<div class="a" style="left:25.3px;top:126.067px;width:8px;height:0;border-top:1px solid #e6e8e8;"></div>
<svg class="a" style="left:21.6px;top:122.867px;" width="7.4" height="7.4" viewBox="0 0 9 9"><rect x=".6" y=".6" width="7.800" height="7.800" rx="1.300" fill="#fff" stroke="#a6cfd0" stroke-width="1.100"/><rect x="1.300" y="5.200" width="6.400" height="2.500" fill="#e6e8e8"/><path d="M2.200 4.600h4.600" stroke="#2a2a2a" stroke-width="1.500"/></svg>
<svg class="a" style="left:33.9px;top:120.467px;" width="13" height="13" viewBox="0 0 16 16"><rect x="0.500" y="0.500" width="15" height="15" rx="3" fill="#0a1a9a"/><text x="8" y="11" font-size="7.500" font-weight="bold" font-family="Liberation Sans,sans-serif" fill="#fff" text-anchor="middle" textLength="13" lengthAdjust="spacingAndGlyphs">CPU</text></svg>
<span class="t " style="left:51.7px;top:119.867px;font-size:8.65px;letter-spacing:-0.108px;">CPU (705003)</span>
<div class="a" style="left:41.4px;top:141.434px;width:8px;height:0;border-top:1px solid #e6e8e8;"></div>
<svg class="a" style="left:37.7px;top:138.234px;" width="7.4" height="7.4" viewBox="0 0 9 9"><rect x=".6" y=".6" width="7.800" height="7.800" rx="1.300" fill="#fff" stroke="#a6cfd0" stroke-width="1.100"/><rect x="1.300" y="5.200" width="6.400" height="2.500" fill="#e6e8e8"/><path d="M2.200 4.600h4.600" stroke="#2a2a2a" stroke-width="1.500"/></svg>
<svg class="a" style="left:50px;top:135.834px;" width="13" height="13" viewBox="0 0 16 16"><path d="M1.500 2.500h6l2 2v9h-8z" fill="#fff" stroke="#444"/><path d="M3 6h4.500M3 8h4.500M3 10h4.500M3 12h4.500" stroke="#3a4ae0" stroke-width="1.100"/><path d="M12.500 1v9.500M11 3.500v9.500q0 1.500 1.500 1.500t1.500-1.500v-11" fill="none" stroke="#3a4ae0" stroke-width="1.100"/></svg>
<span class="t " style="left:67.8px;top:135.234px;font-size:8.65px;letter-spacing:-0.324px;">PLC Logic</span>
<div class="a" style="left:57.5px;top:156.801px;width:8px;height:0;border-top:1px solid #e6e8e8;"></div>
<svg class="a" style="left:53.8px;top:153.601px;" width="7.4" height="7.4" viewBox="0 0 9 9"><rect x=".6" y=".6" width="7.800" height="7.800" rx="1.300" fill="#fff" stroke="#a6cfd0" stroke-width="1.100"/><rect x="1.300" y="5.200" width="6.400" height="2.500" fill="#e6e8e8"/><path d="M2.200 4.600h4.600" stroke="#2a2a2a" stroke-width="1.500"/></svg>
<svg class="a" style="left:66.1px;top:151.201px;" width="13" height="13" viewBox="0 0 16 16"><circle cx="8" cy="8" r="5" fill="none" stroke="#8c8fc0" stroke-width="3.200"/><circle cx="8" cy="8" r="6.700" fill="none" stroke="#70739c" stroke-width="1.800" stroke-dasharray="2.300 1.900"/><circle cx="8" cy="8" r="3.300" fill="#fff" stroke="#666a90" stroke-width="0.600"/></svg>
<span class="t " style="left:83.9px;top:150.601px;font-size:9.37px;letter-spacing:0.000px;font-weight:bold;">Application</span>
<div class="a" style="left:73.6px;top:172.168px;width:8px;height:0;border-top:1px solid #e6e8e8;"></div>
<svg class="a" style="left:69.9px;top:168.968px;" width="7.4" height="7.4" viewBox="0 0 9 9"><rect x=".6" y=".6" width="7.800" height="7.800" rx="1.300" fill="#fff" stroke="#a6cfd0" stroke-width="1.100"/><rect x="1.300" y="5.200" width="6.400" height="2.500" fill="#e6e8e8"/><path d="M2.200 4.600h4.600" stroke="#2a2a2a" stroke-width="1.500"/></svg>
<svg class="a" style="left:82.2px;top:166.568px;" width="13" height="13" viewBox="0 0 16 16"><path d="M1 14.200v-10.800q0-1.600 1.600-1.600h3.200q1 0 1.600 1l.8 1.200h5.600q1.600 0 1.600 1.600v8.600q0 .8-.8.800h-12.800q-.8 0-.8-.8z" fill="#e9b53c" stroke="#b07a18" stroke-width="1"/><path d="M1.800 6.300h12.900v7.200q0 .7-.7.700h-11.500q-.7 0-.7-.7z" fill="#fde98c"/><path d="M1.800 6.300h12.900v2.500h-12.900z" fill="#fff6c0"/><path d="M1.200 14.700h13.800q.9 0 .9-.9v-8" fill="none" stroke="#8a5a10" stroke-width=".9"/></svg>
<span class="t " style="left:100px;top:165.968px;font-size:8.65px;letter-spacing:-0.397px;">-OEM</span>
<div class="a" style="left:89.7px;top:187.535px;width:8px;height:0;border-top:1px solid #e6e8e8;"></div>
<svg class="a" style="left:98.3px;top:181.935px;" width="13" height="13" viewBox="0 0 16 16"><path d="M8 6l1.500 4.500 1.500 1.500M8 6l3.500-1.500" fill="none" stroke="#8a8a8a" stroke-width=".9"/><path d="M4.600 0.800l3.900 2.500-2.500 3-3.900-2.500z" fill="#f2e818" stroke="#222" stroke-width=".9"/><path d="M12.500 3l2.700 1.500-1.700 2.700-2.700-1.500z" fill="#c8107c" stroke="#333" stroke-width=".7"/><path d="M11.200 10.500l3 1.600-1.700 2.800-3-1.700z" fill="#20b4c4" stroke="#333" stroke-width=".7"/></svg>
<span class="t " style="left:116.1px;top:181.335px;font-size:8.65px;letter-spacing:-0.138px;">stOemType (STRUCT)</span>
<div class="a" style="left:89.7px;top:202.902px;width:8px;height:0;border-top:1px solid #e6e8e8;"></div>
<svg class="a" style="left:86px;top:199.702px;" width="7.4" height="7.4" viewBox="0 0 9 9"><rect x=".6" y=".6" width="7.800" height="7.800" rx="1.300" fill="#fff" stroke="#a6cfd0" stroke-width="1.100"/><rect x="1.300" y="5.200" width="6.400" height="2.500" fill="#e6e8e8"/><path d="M2.200 4.600h4.600" stroke="#2a2a2a" stroke-width="1.500"/><path d="M4.500 2.300v4.600" stroke="#2a2a2a" stroke-width="1.300"/></svg>
<svg class="a" style="left:98.3px;top:197.302px;" width="13" height="13" viewBox="0 0 16 16"><path d="M1 14.200v-10.800q0-1.600 1.600-1.600h3.200q1 0 1.600 1l.8 1.200h5.600q1.600 0 1.600 1.600v8.600q0 .8-.8.800h-12.800q-.8 0-.8-.8z" fill="#e9b53c" stroke="#b07a18" stroke-width="1"/><path d="M1.800 6.300h12.900v7.200q0 .7-.7.700h-11.500q-.7 0-.7-.7z" fill="#fde98c"/><path d="M1.800 6.300h12.900v2.500h-12.900z" fill="#fff6c0"/><path d="M1.200 14.700h13.800q.9 0 .9-.9v-8" fill="none" stroke="#8a5a10" stroke-width=".9"/></svg>
<span class="t " style="left:116.1px;top:196.702px;font-size:8.65px;letter-spacing:-0.594px;">FUN</span>
<div class="a" style="left:89.7px;top:218.269px;width:8px;height:0;border-top:1px solid #e6e8e8;"></div>
<svg class="a" style="left:86px;top:215.069px;" width="7.4" height="7.4" viewBox="0 0 9 9"><rect x=".6" y=".6" width="7.800" height="7.800" rx="1.300" fill="#fff" stroke="#a6cfd0" stroke-width="1.100"/><rect x="1.300" y="5.200" width="6.400" height="2.500" fill="#e6e8e8"/><path d="M2.200 4.600h4.600" stroke="#2a2a2a" stroke-width="1.500"/></svg>
<svg class="a" style="left:98.3px;top:212.669px;" width="13" height="13" viewBox="0 0 16 16"><path d="M1 14.200v-10.800q0-1.600 1.600-1.600h3.200q1 0 1.600 1l.8 1.200h5.600q1.600 0 1.600 1.600v8.600q0 .8-.8.800h-12.800q-.8 0-.8-.8z" fill="#e9b53c" stroke="#b07a18" stroke-width="1"/><path d="M1.800 6.300h12.900v7.200q0 .7-.7.700h-11.500q-.7 0-.7-.7z" fill="#fde98c"/><path d="M1.800 6.300h12.900v2.500h-12.900z" fill="#fff6c0"/><path d="M1.200 14.700h13.800q.9 0 .9-.9v-8" fill="none" stroke="#8a5a10" stroke-width=".9"/></svg>
<span class="t " style="left:116.1px;top:212.069px;font-size:8.65px;letter-spacing:-0.108px;">ProcessImage</span>
<div class="a" style="left:105.8px;top:233.636px;width:8px;height:0;border-top:1px solid #e6e8e8;"></div>
<svg class="a" style="left:114.4px;top:228.036px;" width="13" height="13" viewBox="0 0 16 16"><path d="M8 6l1.500 4.500 1.500 1.500M8 6l3.500-1.500" fill="none" stroke="#8a8a8a" stroke-width=".9"/><path d="M4.600 0.800l3.900 2.500-2.500 3-3.900-2.500z" fill="#f2e818" stroke="#222" stroke-width=".9"/><path d="M12.500 3l2.700 1.500-1.700 2.700-2.700-1.500z" fill="#c8107c" stroke="#333" stroke-width=".7"/><path d="M11.200 10.500l3 1.600-1.700 2.800-3-1.700z" fill="#20b4c4" stroke="#333" stroke-width=".7"/></svg>
<span class="t " style="left:132.2px;top:227.436px;font-size:8.65px;letter-spacing:-0.065px;">stProcImageType (STRUCT)</span>
<div class="a" style="left:105.8px;top:249.003px;width:8px;height:0;border-top:1px solid #e6e8e8;"></div>
<svg class="a" style="left:114.4px;top:243.403px;" width="13" height="13" viewBox="0 0 16 16"><path d="M4.500 1.500h7.500l3 3v10.500h-10.500z" fill="#fff" stroke="#222" stroke-width="1.100"/><path d="M12 1.500v3h3" fill="#e8e8e8" stroke="#222" stroke-width=".9"/><path d="M11.500 6v7M13 6v7" stroke="#ccc" stroke-width=".7"/><rect x="4.500" y="2.800" width="5" height="5" fill="#d81818" stroke="#700" stroke-width=".6"/><rect x="5.800" y="4.100" width="2.400" height="2.400" fill="#f8e030"/><rect x=".6" y="7.600" width="5" height="5" fill="#28b028" stroke="#0a600a" stroke-width=".6"/><rect x="1.900" y="8.900" width="2.400" height="2.400" fill="#f0f060"/><rect x="5.400" y="7.800" width="3.200" height="4.800" fill="#e8188c"/><rect x="8.300" y="7.800" width="2.600" height="4.800" fill="#2838d8"/></svg>
<span class="t " style="left:132.2px;top:242.803px;font-size:8.65px;letter-spacing:-0.066px;">ProcessImage01</span>
<div class="a" style="left:111.2px;top:258.17px;width:145.8px;height:15.4px;background:#efefef;"></div>
<div class="a" style="left:105.8px;top:264.37px;width:8px;height:0;border-top:1px solid #e6e8e8;"></div>
<svg class="a" style="left:114.4px;top:258.77px;" width="13" height="13" viewBox="0 0 16 16"><path d="M4.500 1.500h7.500l3 3v10.500h-10.500z" fill="#fff" stroke="#222" stroke-width="1.100"/><path d="M12 1.500v3h3" fill="#e8e8e8" stroke="#222" stroke-width=".9"/><path d="M11.500 6v7M13 6v7" stroke="#ccc" stroke-width=".7"/><rect x="4.500" y="2.800" width="5" height="5" fill="#d81818" stroke="#700" stroke-width=".6"/><rect x="5.800" y="4.100" width="2.400" height="2.400" fill="#f8e030"/><rect x=".6" y="7.600" width="5" height="5" fill="#28b028" stroke="#0a600a" stroke-width=".6"/><rect x="1.900" y="8.900" width="2.400" height="2.400" fill="#f0f060"/><rect x="5.400" y="7.800" width="3.200" height="4.800" fill="#e8188c"/><rect x="8.300" y="7.800" width="2.600" height="4.800" fill="#2838d8"/></svg>
<span class="t " style="left:132.2px;top:258.17px;font-size:8.65px;letter-spacing:-0.066px;">ProcessImage02</span>
<div class="a" style="left:105.8px;top:279.737px;width:8px;height:0;border-top:1px solid #e6e8e8;"></div>
<svg class="a" style="left:114.4px;top:274.137px;" width="13" height="13" viewBox="0 0 16 16"><path d="M4.500 1.500h7.500l3 3v10.500h-10.500z" fill="#fff" stroke="#222" stroke-width="1.100"/><path d="M12 1.500v3h3" fill="#e8e8e8" stroke="#222" stroke-width=".9"/><path d="M11.500 6v7M13 6v7" stroke="#ccc" stroke-width=".7"/><rect x="4.500" y="2.800" width="5" height="5" fill="#d81818" stroke="#700" stroke-width=".6"/><rect x="5.800" y="4.100" width="2.400" height="2.400" fill="#f8e030"/><rect x=".6" y="7.600" width="5" height="5" fill="#28b028" stroke="#0a600a" stroke-width=".6"/><rect x="1.900" y="8.900" width="2.400" height="2.400" fill="#f0f060"/><rect x="5.400" y="7.800" width="3.200" height="4.800" fill="#e8188c"/><rect x="8.300" y="7.800" width="2.600" height="4.800" fill="#2838d8"/></svg>
<span class="t " style="left:132.2px;top:273.537px;font-size:8.65px;letter-spacing:-0.066px;">ProcessImage03</span>
<div class="a" style="left:105.8px;top:295.104px;width:8px;height:0;border-top:1px solid #e6e8e8;"></div>
<svg class="a" style="left:114.4px;top:289.504px;" width="13" height="13" viewBox="0 0 16 16"><path d="M4.500 1.500h7.500l3 3v10.500h-10.500z" fill="#fff" stroke="#222" stroke-width="1.100"/><path d="M12 1.500v3h3" fill="#e8e8e8" stroke="#222" stroke-width=".9"/><path d="M11.500 6v7M13 6v7" stroke="#ccc" stroke-width=".7"/><rect x="4.500" y="2.800" width="5" height="5" fill="#d81818" stroke="#700" stroke-width=".6"/><rect x="5.800" y="4.100" width="2.400" height="2.400" fill="#f8e030"/><rect x=".6" y="7.600" width="5" height="5" fill="#28b028" stroke="#0a600a" stroke-width=".6"/><rect x="1.900" y="8.900" width="2.400" height="2.400" fill="#f0f060"/><rect x="5.400" y="7.800" width="3.200" height="4.800" fill="#e8188c"/><rect x="8.300" y="7.800" width="2.600" height="4.800" fill="#2838d8"/></svg>
<span class="t " style="left:132.2px;top:288.904px;font-size:8.65px;letter-spacing:-0.066px;">ProcessImage04</span>
<div class="a" style="left:105.8px;top:310.471px;width:8px;height:0;border-top:1px solid #e6e8e8;"></div>
<svg class="a" style="left:114.4px;top:304.871px;" width="13" height="13" viewBox="0 0 16 16"><path d="M4.500 1.500h7.500l3 3v10.500h-10.500z" fill="#fff" stroke="#222" stroke-width="1.100"/><path d="M12 1.500v3h3" fill="#e8e8e8" stroke="#222" stroke-width=".9"/><path d="M11.500 6v7M13 6v7" stroke="#ccc" stroke-width=".7"/><rect x="4.500" y="2.800" width="5" height="5" fill="#d81818" stroke="#700" stroke-width=".6"/><rect x="5.800" y="4.100" width="2.400" height="2.400" fill="#f8e030"/><rect x=".6" y="7.600" width="5" height="5" fill="#28b028" stroke="#0a600a" stroke-width=".6"/><rect x="1.900" y="8.900" width="2.400" height="2.400" fill="#f0f060"/><rect x="5.400" y="7.800" width="3.200" height="4.800" fill="#e8188c"/><rect x="8.300" y="7.800" width="2.600" height="4.800" fill="#2838d8"/></svg>
<span class="t " style="left:132.2px;top:304.271px;font-size:8.65px;letter-spacing:-0.066px;">ProcessImage05</span>
<div class="a" style="left:105.8px;top:325.838px;width:8px;height:0;border-top:1px solid #e6e8e8;"></div>
<svg class="a" style="left:114.4px;top:320.238px;" width="13" height="13" viewBox="0 0 16 16"><path d="M4.500 1.500h7.500l3 3v10.500h-10.500z" fill="#fff" stroke="#222" stroke-width="1.100"/><path d="M12 1.500v3h3" fill="#e8e8e8" stroke="#222" stroke-width=".9"/><path d="M11.500 6v7M13 6v7" stroke="#ccc" stroke-width=".7"/><rect x="4.500" y="2.800" width="5" height="5" fill="#d81818" stroke="#700" stroke-width=".6"/><rect x="5.800" y="4.100" width="2.400" height="2.400" fill="#f8e030"/><rect x=".6" y="7.600" width="5" height="5" fill="#28b028" stroke="#0a600a" stroke-width=".6"/><rect x="1.900" y="8.900" width="2.400" height="2.400" fill="#f0f060"/><rect x="5.400" y="7.800" width="3.200" height="4.800" fill="#e8188c"/><rect x="8.300" y="7.800" width="2.600" height="4.800" fill="#2838d8"/></svg>
<span class="t " style="left:132.2px;top:319.638px;font-size:8.65px;letter-spacing:-0.066px;">ProcessImage06</span>
<div class="a" style="left:105.8px;top:341.205px;width:8px;height:0;border-top:1px solid #e6e8e8;"></div>
<svg class="a" style="left:114.4px;top:335.605px;" width="13" height="13" viewBox="0 0 16 16"><path d="M4.500 1.500h7.500l3 3v10.500h-10.500z" fill="#fff" stroke="#222" stroke-width="1.100"/><path d="M12 1.500v3h3" fill="#e8e8e8" stroke="#222" stroke-width=".9"/><path d="M11.500 6v7M13 6v7" stroke="#ccc" stroke-width=".7"/><rect x="4.500" y="2.800" width="5" height="5" fill="#d81818" stroke="#700" stroke-width=".6"/><rect x="5.800" y="4.100" width="2.400" height="2.400" fill="#f8e030"/><rect x=".6" y="7.600" width="5" height="5" fill="#28b028" stroke="#0a600a" stroke-width=".6"/><rect x="1.900" y="8.900" width="2.400" height="2.400" fill="#f0f060"/><rect x="5.400" y="7.800" width="3.200" height="4.800" fill="#e8188c"/><rect x="8.300" y="7.800" width="2.600" height="4.800" fill="#2838d8"/></svg>
<span class="t " style="left:132.2px;top:335.005px;font-size:8.65px;letter-spacing:-0.066px;">ProcessImage07</span>
<div class="a" style="left:105.8px;top:356.572px;width:8px;height:0;border-top:1px solid #e6e8e8;"></div>
<svg class="a" style="left:114.4px;top:350.972px;" width="13" height="13" viewBox="0 0 16 16"><path d="M4.500 1.500h7.500l3 3v10.500h-10.500z" fill="#fff" stroke="#222" stroke-width="1.100"/><path d="M12 1.500v3h3" fill="#e8e8e8" stroke="#222" stroke-width=".9"/><path d="M11.500 6v7M13 6v7" stroke="#ccc" stroke-width=".7"/><rect x="4.500" y="2.800" width="5" height="5" fill="#d81818" stroke="#700" stroke-width=".6"/><rect x="5.800" y="4.100" width="2.400" height="2.400" fill="#f8e030"/><rect x=".6" y="7.600" width="5" height="5" fill="#28b028" stroke="#0a600a" stroke-width=".6"/><rect x="1.900" y="8.900" width="2.400" height="2.400" fill="#f0f060"/><rect x="5.400" y="7.800" width="3.200" height="4.800" fill="#e8188c"/><rect x="8.300" y="7.800" width="2.600" height="4.800" fill="#2838d8"/></svg>
<span class="t " style="left:132.2px;top:350.372px;font-size:8.65px;letter-spacing:-0.066px;">ProcessImage08</span>
<div class="a" style="left:105.8px;top:371.939px;width:8px;height:0;border-top:1px solid #e6e8e8;"></div>
<svg class="a" style="left:114.4px;top:366.339px;" width="13" height="13" viewBox="0 0 16 16"><path d="M4.500 1.500h7.500l3 3v10.500h-10.500z" fill="#fff" stroke="#222" stroke-width="1.100"/><path d="M12 1.500v3h3" fill="#e8e8e8" stroke="#222" stroke-width=".9"/><path d="M11.500 6v7M13 6v7" stroke="#ccc" stroke-width=".7"/><rect x="4.500" y="2.800" width="5" height="5" fill="#d81818" stroke="#700" stroke-width=".6"/><rect x="5.800" y="4.100" width="2.400" height="2.400" fill="#f8e030"/><rect x=".6" y="7.600" width="5" height="5" fill="#28b028" stroke="#0a600a" stroke-width=".6"/><rect x="1.900" y="8.900" width="2.400" height="2.400" fill="#f0f060"/><rect x="5.400" y="7.800" width="3.200" height="4.800" fill="#e8188c"/><rect x="8.300" y="7.800" width="2.600" height="4.800" fill="#2838d8"/></svg>
<span class="t " style="left:132.2px;top:365.739px;font-size:8.65px;letter-spacing:-0.066px;">ProcessImage09</span>
<div class="a" style="left:105.8px;top:387.306px;width:8px;height:0;border-top:1px solid #e6e8e8;"></div>
<svg class="a" style="left:114.4px;top:381.706px;" width="13" height="13" viewBox="0 0 16 16"><path d="M4.500 1.500h7.500l3 3v10.500h-10.500z" fill="#fff" stroke="#222" stroke-width="1.100"/><path d="M12 1.500v3h3" fill="#e8e8e8" stroke="#222" stroke-width=".9"/><path d="M11.500 6v7M13 6v7" stroke="#ccc" stroke-width=".7"/><rect x="4.500" y="2.800" width="5" height="5" fill="#d81818" stroke="#700" stroke-width=".6"/><rect x="5.800" y="4.100" width="2.400" height="2.400" fill="#f8e030"/><rect x=".6" y="7.600" width="5" height="5" fill="#28b028" stroke="#0a600a" stroke-width=".6"/><rect x="1.900" y="8.900" width="2.400" height="2.400" fill="#f0f060"/><rect x="5.400" y="7.800" width="3.200" height="4.800" fill="#e8188c"/><rect x="8.300" y="7.800" width="2.600" height="4.800" fill="#2838d8"/></svg>
<span class="t " style="left:132.2px;top:381.106px;font-size:8.65px;letter-spacing:-0.066px;">ProcessImage10</span>
<div class="a" style="left:89.7px;top:402.673px;width:8px;height:0;border-top:1px solid #e6e8e8;"></div>
<svg class="a" style="left:98.3px;top:397.073px;" width="13" height="13" viewBox="0 0 16 16"><circle cx="8" cy="8.500" r="6.800" fill="#1e58c8"/><circle cx="8" cy="8.500" r="6.800" fill="none" stroke="#0e3a98" stroke-width=".7"/><path d="M3 5.500q2-3 5-3.500 1.500 1.500 0 2.800t-1 2.700-2.500 2.700q-1.500-1.500-1.500-4.700z" fill="#3cb040"/><path d="M9.500 8q2-1 4.500.5.300 3-2.300 5.300-1.500-1-1-2.600t-1.200-3.200z" fill="#3cb040"/><path d="M5 13q1 1.500 3 1.800" stroke="#3cb040" stroke-width="1.200" fill="none"/><path d="M1 12.500q-2-3 4-8t10-3.500" fill="none" stroke="#9ccaf8" stroke-width="1.300"/><path d="M11 15q3-1 4-4" fill="none" stroke="#9ccaf8" stroke-width="1"/></svg>
<span class="t " style="left:116.1px;top:396.473px;font-size:8.82px;letter-spacing:0.000px;">gvlConfigurationController</span>
<div class="a" style="left:89.7px;top:418.04px;width:8px;height:0;border-top:1px solid #e6e8e8;"></div>
<svg class="a" style="left:98.3px;top:412.44px;" width="13" height="13" viewBox="0 0 16 16"><circle cx="8" cy="8.500" r="6.800" fill="#1e58c8"/><circle cx="8" cy="8.500" r="6.800" fill="none" stroke="#0e3a98" stroke-width=".7"/><path d="M3 5.500q2-3 5-3.500 1.500 1.500 0 2.800t-1 2.700-2.500 2.700q-1.500-1.500-1.500-4.700z" fill="#3cb040"/><path d="M9.500 8q2-1 4.500.5.300 3-2.300 5.300-1.500-1-1-2.600t-1.200-3.200z" fill="#3cb040"/><path d="M5 13q1 1.500 3 1.800" stroke="#3cb040" stroke-width="1.200" fill="none"/><path d="M1 12.500q-2-3 4-8t10-3.500" fill="none" stroke="#9ccaf8" stroke-width="1.300"/><path d="M11 15q3-1 4-4" fill="none" stroke="#9ccaf8" stroke-width="1"/></svg>
<span class="t " style="left:116.1px;top:411.84px;font-size:8.78px;letter-spacing:0.000px;">gvlConfigurationGenerator</span>
<div class="a" style="left:89.7px;top:433.407px;width:8px;height:0;border-top:1px solid #e6e8e8;"></div>
<svg class="a" style="left:98.3px;top:427.807px;" width="13" height="13" viewBox="0 0 16 16"><circle cx="8" cy="8.500" r="6.800" fill="#1e58c8"/><circle cx="8" cy="8.500" r="6.800" fill="none" stroke="#0e3a98" stroke-width=".7"/><path d="M3 5.500q2-3 5-3.500 1.500 1.500 0 2.800t-1 2.700-2.500 2.700q-1.500-1.500-1.500-4.700z" fill="#3cb040"/><path d="M9.500 8q2-1 4.500.5.300 3-2.300 5.300-1.500-1-1-2.600t-1.200-3.200z" fill="#3cb040"/><path d="M5 13q1 1.500 3 1.800" stroke="#3cb040" stroke-width="1.200" fill="none"/><path d="M1 12.500q-2-3 4-8t10-3.500" fill="none" stroke="#9ccaf8" stroke-width="1.300"/><path d="M11 15q3-1 4-4" fill="none" stroke="#9ccaf8" stroke-width="1"/></svg>
<span class="t " style="left:116.1px;top:427.207px;font-size:8.67px;letter-spacing:-0.000px;">gvlConfigurationProcessImage</span>
<div class="a" style="left:89.7px;top:448.774px;width:8px;height:0;border-top:1px solid #e6e8e8;"></div>
<svg class="a" style="left:98.3px;top:443.174px;" width="13" height="13" viewBox="0 0 16 16"><circle cx="8" cy="8.500" r="6.800" fill="#1e58c8"/><circle cx="8" cy="8.500" r="6.800" fill="none" stroke="#0e3a98" stroke-width=".7"/><path d="M3 5.500q2-3 5-3.500 1.500 1.500 0 2.800t-1 2.700-2.500 2.700q-1.500-1.500-1.500-4.700z" fill="#3cb040"/><path d="M9.500 8q2-1 4.500.5.300 3-2.300 5.300-1.500-1-1-2.600t-1.200-3.200z" fill="#3cb040"/><path d="M5 13q1 1.500 3 1.800" stroke="#3cb040" stroke-width="1.200" fill="none"/><path d="M1 12.500q-2-3 4-8t10-3.500" fill="none" stroke="#9ccaf8" stroke-width="1.300"/><path d="M11 15q3-1 4-4" fill="none" stroke="#9ccaf8" stroke-width="1"/></svg>
<span class="t " style="left:116.1px;top:442.574px;font-size:8.65px;letter-spacing:-0.135px;">gvlOem</span>
<div class="a" style="left:89.7px;top:464.141px;width:8px;height:0;border-top:1px solid #e6e8e8;"></div>
<svg class="a" style="left:98.3px;top:458.541px;" width="13" height="13" viewBox="0 0 16 16"><circle cx="8" cy="8.500" r="6.800" fill="#1e58c8"/><circle cx="8" cy="8.500" r="6.800" fill="none" stroke="#0e3a98" stroke-width=".7"/><path d="M3 5.500q2-3 5-3.500 1.500 1.500 0 2.800t-1 2.700-2.500 2.700q-1.500-1.500-1.500-4.700z" fill="#3cb040"/><path d="M9.500 8q2-1 4.500.5.300 3-2.300 5.300-1.500-1-1-2.600t-1.200-3.200z" fill="#3cb040"/><path d="M5 13q1 1.500 3 1.800" stroke="#3cb040" stroke-width="1.200" fill="none"/><path d="M1 12.500q-2-3 4-8t10-3.500" fill="none" stroke="#9ccaf8" stroke-width="1.300"/><path d="M11 15q3-1 4-4" fill="none" stroke="#9ccaf8" stroke-width="1"/></svg>
<span class="t " style="left:116.1px;top:457.941px;font-size:8.65px;letter-spacing:-0.068px;">gvlOemConfig</span>
<div class="a" style="left:89.7px;top:479.508px;width:8px;height:0;border-top:1px solid #e6e8e8;"></div>
<svg class="a" style="left:98.3px;top:473.908px;" width="13" height="13" viewBox="0 0 16 16"><path d="M3.500 1.500h10v13h-10z" fill="#fff" stroke="#444"/><path d="M5 4.500h3M5 6.500h3M5 8.500h3M5 10.500h3M9.500 4.500h3M9.500 6.500h3M9.500 8.500h3M9.500 10.500h3" stroke="#888" stroke-width="1"/><rect x="0.500" y="6" width="3" height="4" fill="#2a8080" stroke="#155"/></svg>
<span class="t " style="left:116.1px;top:473.308px;font-size:8.65px;letter-spacing:-0.222px;">ImagePool_OEM</span>
<div class="a" style="left:89.7px;top:494.875px;width:8px;height:0;border-top:1px solid #e6e8e8;"></div>
<svg class="a" style="left:86px;top:491.675px;" width="7.4" height="7.4" viewBox="0 0 9 9"><rect x=".6" y=".6" width="7.800" height="7.800" rx="1.300" fill="#fff" stroke="#a6cfd0" stroke-width="1.100"/><rect x="1.300" y="5.200" width="6.400" height="2.500" fill="#e6e8e8"/><path d="M2.200 4.600h4.600" stroke="#2a2a2a" stroke-width="1.500"/><path d="M4.500 2.300v4.600" stroke="#2a2a2a" stroke-width="1.300"/></svg>
<svg class="a" style="left:98.3px;top:489.275px;" width="13" height="13" viewBox="0 0 16 16"><path d="M2 1h8.500l3.500 3.500v11h-12z" fill="#fff" stroke="#888" stroke-width=".8"/><path d="M14.200 4.500v11.200h-12" fill="none" stroke="#111" stroke-width="1.600"/><path d="M10.500 1v3.500h3.500" fill="#eee" stroke="#333" stroke-width=".9"/><path d="M5 4.500h4.500M5 6.600h6.500M5 8.700h6.500M5 10.800h6.500M5 12.900h6.500" stroke="#4450f0" stroke-width="1.500"/></svg>
<span class="t " style="left:116.1px;top:488.675px;font-size:8.65px;letter-spacing:-0.103px;">SaveRetain (PRG)</span>
<div class="a" style="left:89.7px;top:510.242px;width:8px;height:0;border-top:1px solid #e6e8e8;"></div>
<svg class="a" style="left:98.3px;top:504.642px;" width="13" height="13" viewBox="0 0 16 16"><path d="M3.500 1.500h10v13h-10z" fill="#fff" stroke="#444"/><path d="M5 4.500h3M5 6.500h3M5 8.500h3M5 10.500h3M9.500 4.500h3M9.500 6.500h3M9.500 8.500h3M9.500 10.500h3" stroke="#888" stroke-width="1"/><rect x="0.500" y="6" width="3" height="4" fill="#2a8080" stroke="#155"/></svg>
<span class="t " style="left:116.1px;top:504.042px;font-size:8.65px;letter-spacing:-0.602px;">TL_OEM</span>
<div class="a" style="left:73.6px;top:525.609px;width:8px;height:0;border-top:1px solid #e6e8e8;"></div>
<svg class="a" style="left:69.9px;top:522.409px;" width="7.4" height="7.4" viewBox="0 0 9 9"><rect x=".6" y=".6" width="7.800" height="7.800" rx="1.300" fill="#fff" stroke="#a6cfd0" stroke-width="1.100"/><rect x="1.300" y="5.200" width="6.400" height="2.500" fill="#e6e8e8"/><path d="M2.200 4.600h4.600" stroke="#2a2a2a" stroke-width="1.500"/><path d="M4.500 2.300v4.600" stroke="#2a2a2a" stroke-width="1.300"/></svg>
<svg class="a" style="left:82.2px;top:520.009px;" width="13" height="13" viewBox="0 0 16 16"><path d="M1 14.200v-10.800q0-1.600 1.600-1.600h3.200q1 0 1.600 1l.8 1.200h5.600q1.600 0 1.600 1.600v8.600q0 .8-.8.800h-12.800q-.8 0-.8-.8z" fill="#e9b53c" stroke="#b07a18" stroke-width="1"/><path d="M1.800 6.300h12.900v7.200q0 .7-.7.700h-11.500q-.7 0-.7-.7z" fill="#fde98c"/><path d="M1.800 6.300h12.900v2.500h-12.900z" fill="#fff6c0"/><path d="M1.200 14.700h13.800q.9 0 .9-.9v-8" fill="none" stroke="#8a5a10" stroke-width=".9"/></svg>
<span class="t " style="left:100px;top:519.409px;font-size:8.65px;letter-spacing:-0.011px;">Bootapplication</span>
<div class="a" style="left:73.6px;top:540.976px;width:8px;height:0;border-top:1px solid #e6e8e8;"></div>
<svg class="a" style="left:82.2px;top:535.376px;" width="13" height="13" viewBox="0 0 16 16"><path d="M1 5l3.500-3.500 2.500 1.500v12h-6z" fill="#20c8d0" stroke="#111" stroke-width="1"/><path d="M3 3.500l1.500-2 2.500 1.500" fill="#9ff" stroke="#111" stroke-width=".8"/><path d="M6 5.500l2-2 3 1v10.500h-5z" fill="#e81818" stroke="#111" stroke-width="1"/><path d="M10 4.500l2.500-1.500 3 1v10l-1.500 1h-4z" fill="#f0e418" stroke="#111" stroke-width="1"/><path d="M13.500 4.500v10.500" stroke="#111" stroke-width=".7"/></svg>
<span class="t " style="left:100px;top:534.776px;font-size:8.65px;letter-spacing:-0.066px;">Library Manager</span>
<div class="a" style="left:100px;top:548.476px;width:63px;height:1.5px;background:#6a6af2;"></div>
<div class="a" style="left:73.6px;top:556.343px;width:8px;height:0;border-top:1px solid #e6e8e8;"></div>
<svg class="a" style="left:82.2px;top:550.743px;" width="13" height="13" viewBox="0 0 16 16"><path d="M2 1h8.500l3.500 3.500v11h-12z" fill="#fff" stroke="#888" stroke-width=".8"/><path d="M14.200 4.500v11.200h-12" fill="none" stroke="#111" stroke-width="1.600"/><path d="M10.500 1v3.500h3.500" fill="#eee" stroke="#333" stroke-width=".9"/><path d="M5 4.500h4.500M5 6.600h6.500M5 8.700h6.500M5 10.800h6.500M5 12.900h6.500" stroke="#4450f0" stroke-width="1.500"/></svg>
<span class="t " style="left:100px;top:550.143px;font-size:8.65px;letter-spacing:-0.379px;color:#2a2af0;">PLC_Main (PRG)</span>
<svg class="a" style="left:100px;top:563.343px;" width="64" height="3" viewBox="0 0 64 3"><polyline points="0,0 1.5,2 3,0 4.5,2 6,0 7.5,2 9,0 10.5,2 12,0 13.5,2 15,0 16.5,2 18,0 19.5,2 21,0 22.5,2 24,0 25.5,2 27,0 28.5,2 30,0 31.5,2 33,0 34.5,2 36,0 37.5,2 39,0 40.5,2 42,0 43.5,2 45,0 46.5,2 48,0 49.5,2 51,0 52.5,2 54,0 55.5,2 57,0 58.5,2 60,0 61.5,2 63,0" fill="none" stroke="#e02020" stroke-width=".8"/></svg>
<div class="a" style="left:73.6px;top:571.71px;width:8px;height:0;border-top:1px solid #e6e8e8;"></div>
<svg class="a" style="left:69.9px;top:568.51px;" width="7.4" height="7.4" viewBox="0 0 9 9"><rect x=".6" y=".6" width="7.800" height="7.800" rx="1.300" fill="#fff" stroke="#a6cfd0" stroke-width="1.100"/><rect x="1.300" y="5.200" width="6.400" height="2.500" fill="#e6e8e8"/><path d="M2.200 4.600h4.600" stroke="#2a2a2a" stroke-width="1.500"/><path d="M4.500 2.300v4.600" stroke="#2a2a2a" stroke-width="1.300"/></svg>
<svg class="a" style="left:82.2px;top:566.11px;" width="13" height="13" viewBox="0 0 16 16"><path d="M2 1h8.500l3.500 3.500v11h-12z" fill="#fff" stroke="#888" stroke-width=".8"/><path d="M14.200 4.500v11.200h-12" fill="none" stroke="#111" stroke-width="1.600"/><path d="M10.500 1v3.500h3.500" fill="#eee" stroke="#333" stroke-width=".9"/><path d="M5 4.500h4.500M5 6.600h6.500M5 8.700h6.500M5 10.800h6.500M5 12.900h6.500" stroke="#4450f0" stroke-width="1.500"/></svg>
<span class="t " style="left:100px;top:565.51px;font-size:8.65px;letter-spacing:-0.562px;">PLC_PRG (PRG)</span>
<div class="a" style="left:73.6px;top:587.077px;width:8px;height:0;border-top:1px solid #e6e8e8;"></div>
<svg class="a" style="left:82.2px;top:581.477px;" width="13" height="13" viewBox="0 0 16 16"><path d="M2 1h8.500l3.500 3.500v11h-12z" fill="#fff" stroke="#888" stroke-width=".8"/><path d="M14.200 4.500v11.200h-12" fill="none" stroke="#111" stroke-width="1.600"/><path d="M10.500 1v3.500h3.500" fill="#eee" stroke="#333" stroke-width=".9"/><path d="M5 4.500h4.500M5 6.600h6.500M5 8.700h6.500M5 10.800h6.500M5 12.900h6.500" stroke="#4450f0" stroke-width="1.500"/></svg>
<span class="t " style="left:100px;top:580.877px;font-size:8.65px;letter-spacing:-0.402px;">PLC_PRG_Alarms (PRG)</span>
<div class="a" style="left:73.6px;top:602.444px;width:8px;height:0;border-top:1px solid #e6e8e8;"></div>
<svg class="a" style="left:82.2px;top:596.844px;" width="13" height="13" viewBox="0 0 16 16"><path d="M2 1h8.500l3.500 3.500v11h-12z" fill="#fff" stroke="#888" stroke-width=".8"/><path d="M14.200 4.500v11.200h-12" fill="none" stroke="#111" stroke-width="1.600"/><path d="M10.500 1v3.500h3.500" fill="#eee" stroke="#333" stroke-width=".9"/><path d="M5 4.500h4.500M5 6.600h6.500M5 8.700h6.500M5 10.800h6.500M5 12.900h6.500" stroke="#4450f0" stroke-width="1.500"/></svg>
<span class="t " style="left:100px;top:596.244px;font-size:8.65px;letter-spacing:-0.439px;">PRG_Visu (PRG)</span>
<div class="a" style="left:73.6px;top:617.811px;width:8px;height:0;border-top:1px solid #e6e8e8;"></div>
<svg class="a" style="left:69.9px;top:614.611px;" width="7.4" height="7.4" viewBox="0 0 9 9"><rect x=".6" y=".6" width="7.800" height="7.800" rx="1.300" fill="#fff" stroke="#a6cfd0" stroke-width="1.100"/><rect x="1.300" y="5.200" width="6.400" height="2.500" fill="#e6e8e8"/><path d="M2.200 4.600h4.600" stroke="#2a2a2a" stroke-width="1.500"/></svg>
<svg class="a" style="left:82.2px;top:612.211px;" width="13" height="13" viewBox="0 0 16 16"><path d="M1.500 4l3-3h10.500v10l-3 3.500h-10.500z" fill="#c4c4c4" stroke="#555" stroke-width=".9"/><path d="M1.500 4h10.500v10.500M12 4l3-3M5.500 1l-1 3v10M10 1l-1 3" fill="none" stroke="#666" stroke-width=".8"/><rect x="3" y="5.500" width="1.800" height="1.800" fill="#18c018"/><rect x="7" y="5" width="1.500" height="1.500" fill="#d02020"/><rect x="10.500" y="5" width="1.500" height="1.500" fill="#d02020"/><circle cx="10" cy="10.500" r="3" fill="none" stroke="#f0e020" stroke-width="2.400"/><circle cx="10" cy="10.500" r="4.300" fill="none" stroke="#222" stroke-width="1.300" stroke-dasharray="1.500 1.900"/><circle cx="10" cy="10.500" r="1.200" fill="#333"/></svg>
<span class="t " style="left:100px;top:611.611px;font-size:8.69px;letter-spacing:-0.000px;">Task Configuration</span>
<div class="a" style="left:89.7px;top:633.178px;width:8px;height:0;border-top:1px solid #e6e8e8;"></div>
<svg class="a" style="left:86px;top:629.978px;" width="7.4" height="7.4" viewBox="0 0 9 9"><rect x=".6" y=".6" width="7.800" height="7.800" rx="1.300" fill="#fff" stroke="#a6cfd0" stroke-width="1.100"/><rect x="1.300" y="5.200" width="6.400" height="2.500" fill="#e6e8e8"/><path d="M2.200 4.600h4.600" stroke="#2a2a2a" stroke-width="1.500"/></svg>
<svg class="a" style="left:98.3px;top:627.578px;" width="13" height="13" viewBox="0 0 16 16"><path d="M1 11l7-3.500 7 3-7 4z" fill="#fff" stroke="#333" stroke-width=".9"/><path d="M1 9l7-3.500 7 3-7 4z" fill="#fff" stroke="#333" stroke-width=".9"/><path d="M1 7l7-3.500 7 3-7 4z" fill="#fff" stroke="#333" stroke-width=".9"/><path d="M6.800 .5h2.400v3.500h2l-3.200 3.500-3.200-3.500h2z" fill="#1428c0" stroke="#0a1470" stroke-width=".5"/></svg>
<span class="t " style="left:116.1px;top:626.978px;font-size:8.65px;letter-spacing:-0.068px;">MainTask</span>
<div class="a" style="left:105.8px;top:648.545px;width:8px;height:0;border-top:1px solid #e6e8e8;"></div>
<svg class="a" style="left:114.4px;top:642.945px;" width="13" height="13" viewBox="0 0 16 16"><path d="M4.500 1.500h7.500l3 3v10.500h-10.500z" fill="#fff" stroke="#666" stroke-width=".8"/><path d="M15.200 4.500v10.700h-10.700" fill="none" stroke="#222" stroke-width="1.300"/><path d="M12 1.500v3h3" fill="#eee" stroke="#444" stroke-width=".8"/><path d="M11.500 7v6M13 7v6" stroke="#ccc" stroke-width=".7"/><rect x="5.800" y="2.800" width="3.800" height="3.800" fill="#fff" stroke="#c01828" stroke-width="1.300"/><rect x="5.800" y="7.400" width="3.800" height="3.800" fill="#fff" stroke="#2030c8" stroke-width="1.300"/><rect x="1.200" y="7.400" width="3.800" height="3.800" fill="#fff" stroke="#18a028" stroke-width="1.300"/></svg>
<span class="t " style="left:132.2px;top:642.345px;font-size:8.65px;letter-spacing:-0.770px;">PLC_PRG</span>
<div class="a" style="left:105.8px;top:663.912px;width:8px;height:0;border-top:1px solid #e6e8e8;"></div>
<svg class="a" style="left:114.4px;top:658.312px;" width="13" height="13" viewBox="0 0 16 16"><path d="M4.500 1.500h7.500l3 3v10.500h-10.500z" fill="#fff" stroke="#666" stroke-width=".8"/><path d="M15.200 4.500v10.700h-10.700" fill="none" stroke="#222" stroke-width="1.300"/><path d="M12 1.500v3h3" fill="#eee" stroke="#444" stroke-width=".8"/><path d="M11.500 7v6M13 7v6" stroke="#ccc" stroke-width=".7"/><rect x="5.800" y="2.800" width="3.800" height="3.800" fill="#fff" stroke="#c01828" stroke-width="1.300"/><rect x="5.800" y="7.400" width="3.800" height="3.800" fill="#fff" stroke="#2030c8" stroke-width="1.300"/><rect x="1.200" y="7.400" width="3.800" height="3.800" fill="#fff" stroke="#18a028" stroke-width="1.300"/></svg>
<span class="t " style="left:132.2px;top:657.712px;font-size:8.65px;letter-spacing:-0.529px;">PRG_Visu</span>
<div class="a" style="left:105.8px;top:679.279px;width:8px;height:0;border-top:1px solid #e6e8e8;"></div>
<svg class="a" style="left:114.4px;top:673.679px;" width="13" height="13" viewBox="0 0 16 16"><path d="M4.500 1.500h7.500l3 3v10.500h-10.500z" fill="#fff" stroke="#666" stroke-width=".8"/><path d="M15.200 4.500v10.700h-10.700" fill="none" stroke="#222" stroke-width="1.300"/><path d="M12 1.500v3h3" fill="#eee" stroke="#444" stroke-width=".8"/><path d="M11.500 7v6M13 7v6" stroke="#ccc" stroke-width=".7"/><rect x="5.800" y="2.800" width="3.800" height="3.800" fill="#fff" stroke="#c01828" stroke-width="1.300"/><rect x="5.800" y="7.400" width="3.800" height="3.800" fill="#fff" stroke="#2030c8" stroke-width="1.300"/><rect x="1.200" y="7.400" width="3.800" height="3.800" fill="#fff" stroke="#18a028" stroke-width="1.300"/></svg>
<span class="t " style="left:132.2px;top:673.079px;font-size:8.65px;letter-spacing:-0.424px;">PLC_Main</span>
<div class="a" style="left:89.7px;top:694.646px;width:8px;height:0;border-top:1px solid #e6e8e8;"></div>
<svg class="a" style="left:86px;top:691.446px;" width="7.4" height="7.4" viewBox="0 0 9 9"><rect x=".6" y=".6" width="7.800" height="7.800" rx="1.300" fill="#fff" stroke="#a6cfd0" stroke-width="1.100"/><rect x="1.300" y="5.200" width="6.400" height="2.500" fill="#e6e8e8"/><path d="M2.200 4.600h4.600" stroke="#2a2a2a" stroke-width="1.500"/></svg>
<svg class="a" style="left:98.3px;top:689.046px;" width="13" height="13" viewBox="0 0 16 16"><path d="M1 11l7-3.500 7 3-7 4z" fill="#fff" stroke="#333" stroke-width=".9"/><path d="M1 9l7-3.500 7 3-7 4z" fill="#fff" stroke="#333" stroke-width=".9"/><path d="M1 7l7-3.500 7 3-7 4z" fill="#fff" stroke="#333" stroke-width=".9"/><path d="M6.800 .5h2.400v3.500h2l-3.200 3.500-3.200-3.500h2z" fill="#1428c0" stroke="#0a1470" stroke-width=".5"/></svg>
<span class="t " style="left:116.1px;top:688.446px;font-size:8.65px;letter-spacing:-0.037px;">SaveRetainTask</span>
<div class="a" style="left:105.8px;top:710.013px;width:8px;height:0;border-top:1px solid #e6e8e8;"></div>
<svg class="a" style="left:114.4px;top:704.413px;" width="13" height="13" viewBox="0 0 16 16"><path d="M4.500 1.500h7.500l3 3v10.500h-10.500z" fill="#fff" stroke="#666" stroke-width=".8"/><path d="M15.200 4.500v10.700h-10.700" fill="none" stroke="#222" stroke-width="1.300"/><path d="M12 1.500v3h3" fill="#eee" stroke="#444" stroke-width=".8"/><path d="M11.500 7v6M13 7v6" stroke="#ccc" stroke-width=".7"/><rect x="5.800" y="2.800" width="3.800" height="3.800" fill="#fff" stroke="#c01828" stroke-width="1.300"/><rect x="5.800" y="7.400" width="3.800" height="3.800" fill="#fff" stroke="#2030c8" stroke-width="1.300"/><rect x="1.200" y="7.400" width="3.800" height="3.800" fill="#fff" stroke="#18a028" stroke-width="1.300"/></svg>
<span class="t " style="left:132.2px;top:703.813px;font-size:8.65px;letter-spacing:-0.073px;">SaveRetain</span>
<div class="a" style="left:89.7px;top:725.38px;width:8px;height:0;border-top:1px solid #e6e8e8;"></div>
<svg class="a" style="left:86px;top:722.18px;" width="7.4" height="7.4" viewBox="0 0 9 9"><rect x=".6" y=".6" width="7.800" height="7.800" rx="1.300" fill="#fff" stroke="#a6cfd0" stroke-width="1.100"/><rect x="1.300" y="5.200" width="6.400" height="2.500" fill="#e6e8e8"/><path d="M2.200 4.600h4.600" stroke="#2a2a2a" stroke-width="1.500"/></svg>
<svg class="a" style="left:98.3px;top:719.78px;" width="13" height="13" viewBox="0 0 16 16"><path d="M1 11l7-3.500 7 3-7 4z" fill="#fff" stroke="#333" stroke-width=".9"/><path d="M1 9l7-3.500 7 3-7 4z" fill="#fff" stroke="#333" stroke-width=".9"/><path d="M1 7l7-3.500 7 3-7 4z" fill="#fff" stroke="#333" stroke-width=".9"/><path d="M6.800 .5h2.400v3.500h2l-3.200 3.500-3.200-3.500h2z" fill="#1428c0" stroke="#0a1470" stroke-width=".5"/></svg>
<span class="t " style="left:116.1px;top:719.18px;font-size:8.65px;letter-spacing:-0.329px;">VISU_TASK</span>
<div class="a" style="left:105.8px;top:740.747px;width:8px;height:0;border-top:1px solid #e6e8e8;"></div>
<svg class="a" style="left:114.4px;top:735.147px;" width="13" height="13" viewBox="0 0 16 16"><path d="M4.500 1.500h7.500l3 3v10.500h-10.500z" fill="#fff" stroke="#666" stroke-width=".8"/><path d="M15.200 4.500v10.700h-10.700" fill="none" stroke="#222" stroke-width="1.300"/><path d="M12 1.500v3h3" fill="#eee" stroke="#444" stroke-width=".8"/><path d="M11.500 7v6M13 7v6" stroke="#ccc" stroke-width=".7"/><rect x="5.800" y="2.800" width="3.800" height="3.800" fill="#fff" stroke="#c01828" stroke-width="1.300"/><rect x="5.800" y="7.400" width="3.800" height="3.800" fill="#fff" stroke="#2030c8" stroke-width="1.300"/><rect x="1.200" y="7.400" width="3.800" height="3.800" fill="#fff" stroke="#18a028" stroke-width="1.300"/></svg>
<span class="t " style="left:132.2px;top:734.547px;font-size:8.65px;letter-spacing:-0.226px;">VisuElems.Visu_Prg</span>
<div class="a" style="left:105.8px;top:756.114px;width:8px;height:0;border-top:1px solid #e6e8e8;"></div>
<svg class="a" style="left:114.4px;top:750.514px;" width="13" height="13" viewBox="0 0 16 16"><path d="M4.500 1.500h7.500l3 3v10.500h-10.500z" fill="#fff" stroke="#666" stroke-width=".8"/><path d="M15.200 4.500v10.700h-10.700" fill="none" stroke="#222" stroke-width="1.300"/><path d="M12 1.500v3h3" fill="#eee" stroke="#444" stroke-width=".8"/><path d="M11.500 7v6M13 7v6" stroke="#ccc" stroke-width=".7"/><rect x="5.800" y="2.800" width="3.800" height="3.800" fill="#fff" stroke="#c01828" stroke-width="1.300"/><rect x="5.800" y="7.400" width="3.800" height="3.800" fill="#fff" stroke="#2030c8" stroke-width="1.300"/><rect x="1.200" y="7.400" width="3.800" height="3.800" fill="#fff" stroke="#18a028" stroke-width="1.300"/></svg>
<span class="t " style="left:132.2px;top:749.914px;font-size:8.65px;letter-spacing:-0.234px;">PRG_Visualization</span>
<div class="a" style="left:105.8px;top:771.481px;width:8px;height:0;border-top:1px solid #e6e8e8;"></div>
<svg class="a" style="left:114.4px;top:765.881px;" width="13" height="13" viewBox="0 0 16 16"><path d="M4.500 1.500h7.500l3 3v10.500h-10.500z" fill="#fff" stroke="#666" stroke-width=".8"/><path d="M15.200 4.500v10.700h-10.700" fill="none" stroke="#222" stroke-width="1.300"/><path d="M12 1.500v3h3" fill="#eee" stroke="#444" stroke-width=".8"/><path d="M11.500 7v6M13 7v6" stroke="#ccc" stroke-width=".7"/><rect x="5.800" y="2.800" width="3.800" height="3.800" fill="#fff" stroke="#c01828" stroke-width="1.300"/><rect x="5.800" y="7.400" width="3.800" height="3.800" fill="#fff" stroke="#2030c8" stroke-width="1.300"/><rect x="1.200" y="7.400" width="3.800" height="3.800" fill="#fff" stroke="#18a028" stroke-width="1.300"/></svg>
<span class="t " style="left:132.2px;top:765.281px;font-size:8.65px;letter-spacing:-0.114px;">VisuClientManager</span>
<div class="a" style="left:73.6px;top:786.848px;width:8px;height:0;border-top:1px solid #e6e8e8;"></div>
<svg class="a" style="left:69.9px;top:783.648px;" width="7.4" height="7.4" viewBox="0 0 9 9"><rect x=".6" y=".6" width="7.800" height="7.800" rx="1.300" fill="#fff" stroke="#a6cfd0" stroke-width="1.100"/><rect x="1.300" y="5.200" width="6.400" height="2.500" fill="#e6e8e8"/><path d="M2.200 4.600h4.600" stroke="#2a2a2a" stroke-width="1.500"/><path d="M4.500 2.300v4.600" stroke="#2a2a2a" stroke-width="1.300"/></svg>
<svg class="a" style="left:82.2px;top:781.248px;" width="13" height="13" viewBox="0 0 16 16"><path d="M4.500 1.500h7l3 3v10.500h-10z" fill="#fff" stroke="#444" stroke-width=".9"/><path d="M14.700 4.500v10.700h-10" fill="none" stroke="#222" stroke-width="1.200"/><rect x="2.500" y="8" width="9.500" height="7" fill="#c81414" stroke="#600" stroke-width=".7"/><rect x="5" y="11" width="4.500" height="2.500" fill="#fff"/><rect x="4.800" y="4.500" width="4.500" height="3.500" fill="#d02020" stroke="#600" stroke-width=".6"/><rect x="6" y="2.500" width="2.300" height="2.300" fill="#f0d020"/><circle cx="1.800" cy="9" r="1.300" fill="#20a030"/></svg>
<span class="t " style="left:100px;top:780.648px;font-size:8.65px;letter-spacing:-0.094px;">Visualization Manager</span>
<div class="a" style="left:41.4px;top:802.215px;width:8px;height:0;border-top:1px solid #e6e8e8;"></div>
<svg class="a" style="left:50px;top:796.615px;" width="13" height="13" viewBox="0 0 16 16"><rect x="0.500" y="0.500" width="15" height="15" rx="1.800" fill="#1c4cb4"/><text x="8" y="7.600" font-size="7" font-weight="bold" font-family="Liberation Sans,sans-serif" fill="#fff" text-anchor="middle" textLength="12" lengthAdjust="spacingAndGlyphs">PLC</text><path d="M2 11.500h12.500" stroke="#fff" stroke-width="3" stroke-dasharray="2.500 1"/><path d="M2 11.500h12.500" stroke="#1c4cb4" stroke-width="1" stroke-dasharray="1 2.500" stroke-dashoffset="-.75"/></svg>
<span class="t " style="left:67.8px;top:796.015px;font-size:8.65px;letter-spacing:-0.058px;">PLC_Manager (70.0000)</span>
<div class="a" style="left:41.4px;top:817.582px;width:8px;height:0;border-top:1px solid #e6e8e8;"></div>
<svg class="a" style="left:50px;top:811.982px;" width="13" height="13" viewBox="0 0 16 16"><rect x="0.500" y="0.500" width="15" height="15" rx="3" fill="#0a1a9a"/><path d="M1.500 9q6.500-8.500 13 0l-1.500 1q-5-5-10 0z" fill="#fff"/><path d="M4 8.500q4-3.500 8 0-4 4-8 0z" fill="#fff"/><circle cx="8" cy="8.200" r="1.900" fill="#0a1a9a"/></svg>
<span class="t " style="left:67.8px;top:811.382px;font-size:8.82px;letter-spacing:0.000px;">Observer (705003)</span>
<div class="a" style="left:41.4px;top:832.949px;width:8px;height:0;border-top:1px solid #e6e8e8;"></div>
<svg class="a" style="left:37.7px;top:829.749px;" width="7.4" height="7.4" viewBox="0 0 9 9"><rect x=".6" y=".6" width="7.800" height="7.800" rx="1.300" fill="#fff" stroke="#a6cfd0" stroke-width="1.100"/><rect x="1.300" y="5.200" width="6.400" height="2.500" fill="#e6e8e8"/><path d="M2.200 4.600h4.600" stroke="#2a2a2a" stroke-width="1.500"/></svg>
<svg class="a" style="left:50px;top:827.349px;" width="13" height="13" viewBox="0 0 16 16"><rect x="0.500" y="0.500" width="15" height="15" rx="3" fill="#0a1a9a"/><rect x="2.800" y="2" width="4.200" height="6.500" fill="#fff"/><rect x="9" y="2" width="4.200" height="6.500" fill="#fff"/><path d="M4.900 8.500v2M11.100 8.500v2" stroke="#fff" stroke-width="1.600"/><rect x="1.500" y="10" width="13" height="2.600" fill="#fff"/><path d="M1.500 11.300h13" stroke="#0a1a9a" stroke-width=".7" stroke-dasharray="1.200 1"/></svg>
<span class="t " style="left:67.8px;top:826.749px;font-size:8.67px;letter-spacing:0.000px;">Systembus (705000)</span>
<div class="a" style="left:57.5px;top:848.316px;width:8px;height:0;border-top:1px solid #e6e8e8;"></div>
<svg class="a" style="left:53.8px;top:845.116px;" width="7.4" height="7.4" viewBox="0 0 9 9"><rect x=".6" y=".6" width="7.800" height="7.800" rx="1.300" fill="#fff" stroke="#a6cfd0" stroke-width="1.100"/><rect x="1.300" y="5.200" width="6.400" height="2.500" fill="#e6e8e8"/><path d="M2.200 4.600h4.600" stroke="#2a2a2a" stroke-width="1.500"/></svg>
<svg class="a" style="left:66.1px;top:842.716px;" width="13" height="13" viewBox="0 0 16 16"><path d="M2.500 4l3.500-3h8v10.500l-3.500 3.500h-8z" fill="#d4d4d4" stroke="#444" stroke-width=".9"/><path d="M2.500 4h8v11M10.500 4l3.500-3" fill="none" stroke="#555" stroke-width=".8"/><path d="M10.500 4l3.500-3v10.500l-3.500 3.500z" fill="#9a9a9a"/><rect x="4" y="5.500" width="2" height="2" fill="#20c020"/><rect x="7.500" y="5.500" width="1.600" height="1.600" fill="#d04040"/><path d="M6.700 5v9" stroke="#999" stroke-width=".6"/></svg>
<span class="t " style="left:83.9px;top:842.116px;font-size:8.65px;letter-spacing:-0.032px;">ROU01_2 (705043)</span>
<div class="a" style="left:73.6px;top:863.683px;width:8px;height:0;border-top:1px solid #e6e8e8;"></div>
<svg class="a" style="left:82.2px;top:858.083px;" width="13" height="13" viewBox="0 0 16 16"><rect x="1" y="1" width="14" height="14" rx="1.500" fill="#fff" stroke="#0a1a9a" stroke-width="1.600"/><rect x="3" y="3" width="10" height="10" fill="#0a1a9a"/><path d="M5 4.500l4.500 3.500-4.500 3.500" fill="none" stroke="#fff" stroke-width="1.500"/></svg>
<span class="t " style="left:100px;top:857.483px;font-size:8.65px;letter-spacing:-0.066px;">CTR04_3 (705010)</span>
<div class="a" style="left:2px;top:1054.5px;width:255px;height:13.5px;background:#f0f0f0;"></div>
<div class="a" style="left:15px;top:1056px;width:226px;height:10.8px;background:#cdcdcd;"></div>
<svg class="a" style="left:5px;top:1058px;" width="5" height="7" viewBox="0 0 5 7"><path d="M4.500 .5l-3.500 3 3.500 3" fill="none" stroke="#333" stroke-width="1.300"/></svg>
<svg class="a" style="left:247px;top:1058px;" width="5" height="7" viewBox="0 0 5 7"><path d="M.5 .5l3.500 3-3.500 3" fill="none" stroke="#333" stroke-width="1.300"/></svg>
<div class="a" style="left:1px;top:1068.5px;width:257px;height:1px;background:#8c8c8c;"></div>
<div class="a" style="left:54px;top:1071px;width:204px;height:0.8px;background:#d0d0d0;"></div>
<div class="a" style="left:1.5px;top:1069.5px;width:52px;height:18px;background:#ffffff;border:1px solid #a8a8a8;border-top:none;border-radius:0 0 3px 3px;"></div>
<svg class="a" style="left:3px;top:1072.5px;" width="13.5" height="13" viewBox="0 0 16 16"><path d="M1.500 4.500q0-2.500 6.500-3t6.500 2.500v3.500q-3 3-7.500 2.500t-5.500-2.500z" fill="#b8b8b8" stroke="#555" stroke-width=".8"/><ellipse cx="8" cy="4.300" rx="5.500" ry="2.300" fill="#e0e0e0"/><path d="M11 6l3-1.500" stroke="#444" stroke-width="1"/><path d="M1 12.800h14" stroke="#111" stroke-width="1.800"/><path d="M1 11.600h14" stroke="#80b0d8" stroke-width=".8"/><circle cx="7.500" cy="11.800" r="2.400" fill="#f0b010"/><circle cx="7.200" cy="11.300" r="1" fill="#ffe890"/><path d="M7.500 8v2" stroke="#666" stroke-width="1"/></svg>
<span class="t " style="left:18.5px;top:1071px;font-size:8.65px;letter-spacing:-0.110px;">Devices</span>
<svg class="a" style="left:57px;top:1072.5px;" width="12.5" height="12.5" viewBox="0 0 16 16"><path d="M5.500 1.500h6l3 3v10h-9z" fill="#fff" stroke="#555"/><path d="M2.500 3.500h6l2 2v9h-8z" fill="#eef" stroke="#446"/></svg>
<span class="t " style="left:71.5px;top:1071px;font-size:8.65px;letter-spacing:-0.519px;color:#555;">POUs</span>
<div class="a" style="left:54.5px;top:1071px;width:1px;height:16px;background:#c0c0c0;"></div>
<div class="a" style="left:262px;top:85px;width:1025px;height:1003px;background:#f0f0f0;border:1px solid #a0a0a0;"></div>
<div class="a" style="left:263px;top:86px;width:1023px;height:17px;background:#f0f0f0;"></div>
<div class="a" style="left:263px;top:101.3px;width:1023px;height:1px;background:#b4b4b4;"></div>
<svg class="a" style="left:262.5px;top:87.3px;" width="130" height="14.8" viewBox="0 0 130 14.800"><path d="M0 14.800l14.500-12.600q2.500-1.700 5-1.700h106q3.500 0 3.500 3.500v10.800z" fill="#fff" stroke="#9a9a9a" stroke-width="1"/></svg>
<div class="a" style="left:263.5px;top:101.3px;width:127.5px;height:1.2px;background:#ffffff;"></div>
<svg class="a" style="left:277px;top:87.8px;" width="13" height="13" viewBox="0 0 16 16"><path d="M4.500 1.500h7.500l3 3v10.500h-10.500z" fill="#fff" stroke="#222" stroke-width="1.100"/><path d="M12 1.500v3h3" fill="#e8e8e8" stroke="#222" stroke-width=".9"/><path d="M11.500 6v7M13 6v7" stroke="#ccc" stroke-width=".7"/><rect x="4.500" y="2.800" width="5" height="5" fill="#d81818" stroke="#700" stroke-width=".6"/><rect x="5.800" y="4.100" width="2.400" height="2.400" fill="#f8e030"/><rect x=".6" y="7.600" width="5" height="5" fill="#28b028" stroke="#0a600a" stroke-width=".6"/><rect x="1.900" y="8.900" width="2.400" height="2.400" fill="#f0f060"/><rect x="5.400" y="7.800" width="3.200" height="4.800" fill="#e8188c"/><rect x="8.300" y="7.800" width="2.600" height="4.800" fill="#2838d8"/></svg>
<span class="t " style="left:296px;top:86.6px;font-size:9.69px;letter-spacing:0.000px;font-weight:bold;">ProcessImage02</span>
<svg class="a" style="left:380.2px;top:90.8px;" width="8" height="8" viewBox="0 0 8 8"><path d="M1 1l6 6M7 1l-6 6" stroke="#111" stroke-width="1.800"/></svg>
<svg class="a" style="left:1274.5px;top:93px;" width="7" height="4" viewBox="0 0 7 4"><path d="M0 0h7l-3.500 4z" fill="#111"/></svg>
<div class="a" style="left:263px;top:102.3px;width:1023px;height:3px;background:#f4f4f4;"></div>
<div class="a" style="left:263px;top:105.2px;width:1023px;height:15.6px;background:#efefef;"></div>
<div class="a" style="left:353.3px;top:104.8px;width:932.7px;height:0.8px;background:#e6e6e6;"></div>
<div class="a" style="left:263px;top:102.3px;width:90.3px;height:19.2px;background:#ffffff;"></div>
<div class="a" style="left:353.5px;top:120.6px;width:932.5px;height:0.9px;background:#d8d8d8;"></div>
<svg class="a" style="left:268.8px;top:104.2px;" width="12" height="12" viewBox="0 0 16 16"><rect x="1" y="3" width="14" height="10" fill="#f4f4f4" stroke="#333" stroke-width="1.300"/><path d="M3.500 6v4M6.500 6v4M3.500 8h3M9 6h3.500M9 8h3.500M9 10h3.500" stroke="#555" stroke-width="1"/></svg>
<span class="t " style="left:285.5px;top:104.5px;font-size:9.00px;letter-spacing:0.000px;">Interface Editor</span>
<div class="a" style="left:353.5px;top:105.2px;width:1px;height:15.4px;background:#dedede;"></div>
<div class="a" style="left:464.5px;top:105.2px;width:1px;height:15.4px;background:#dedede;"></div>
<svg class="a" style="left:357px;top:106.3px;" width="12.5" height="12.5" viewBox="0 0 16 16"><rect x="1" y="3" width="14" height="10" rx="1.500" fill="#e0e0e0" stroke="#222" stroke-width="1.400"/><rect x="3" y="9" width="10" height="2" fill="#bbb"/></svg>
<span class="t " style="left:374px;top:105.5px;font-size:8.84px;letter-spacing:0.000px;">Hotkeys Configuration</span>
<div class="a" style="left:466.5px;top:105.2px;width:1px;height:15.4px;background:#dedede;"></div>
<div class="a" style="left:538px;top:105.2px;width:1px;height:15.4px;background:#dedede;"></div>
<svg class="a" style="left:471.5px;top:106.3px;" width="12.5" height="12.5" viewBox="0 0 16 16"><rect x="1" y="2" width="14" height="12" fill="#fff" stroke="#222" stroke-width=".8"/><rect x="1" y="2" width="14" height="3" fill="#1a2ab0"/><rect x="2" y="6" width="3" height="2" fill="#e02020"/><rect x="2" y="9" width="3" height="2" fill="#e0c020"/><rect x="2" y="12" width="3" height="1.500" fill="#20a020"/><path d="M6.500 7h3M11 7h3M6.500 10h3M11 10h3M6.500 12.500h3M11 12.500h3" stroke="#555" stroke-width="1.300"/></svg>
<span class="t " style="left:488.5px;top:105.5px;font-size:8.65px;letter-spacing:-0.134px;">Element List</span>
<div class="a" style="left:540px;top:105.2px;width:1px;height:15.4px;background:#dedede;"></div>
<div class="a" style="left:642px;top:105.2px;width:1px;height:15.4px;background:#dedede;"></div>
<svg class="a" style="left:545px;top:105px;" width="12" height="12" viewBox="0 0 16 16"><rect x="1" y="3" width="14" height="10" fill="#f4f4f4" stroke="#333" stroke-width="1.300"/><path d="M3.500 6v4M6.500 6v4M3.500 8h3M9 6h3.500M9 8h3.500M9 10h3.500" stroke="#555" stroke-width="1"/></svg>
<span class="t " style="left:562px;top:105.5px;font-size:8.72px;letter-spacing:0.000px;">Frame configuration</span>
<div class="a" style="left:263px;top:121.5px;width:1023px;height:182px;background:#ffffff;"></div>
<div class="a" style="left:303.5px;top:122.5px;width:2px;height:177.5px;background:#8c8c8c;"></div>
<svg class="a" style="left:267px;top:125px;" width="7" height="8" viewBox="0 0 7 8"><rect x=".5" y=".5" width="6" height="7" fill="#fff" stroke="#3a7ac0" stroke-width="1"/><path d="M.5 4h6" stroke="#3a7ac0"/></svg>
<span class="t" style="left:296px;top:121.5px;font-size:8.2px;color:#d04060">1</span>
<span class="t" style="left:296px;top:135.5px;font-size:8.2px;color:#4a8ac8">2</span>
<span class="t" style="left:296px;top:149.5px;font-size:8.2px;color:#4a8ac8">3</span>
<span class="t m" style="left:322.5px;top:121.5px;font-size:9.4px;letter-spacing:0.059px;color:#1a1ae0">VAR_IN_OUT</span>
<span class="t m" style="left:345.8px;top:135.3px;font-size:9.4px;letter-spacing:0.059px;color:#222">stOem</span>
<span class="t m" style="left:437px;top:135.3px;font-size:9.4px;letter-spacing:-0.041px;color:#1a1ae0">:</span>
<span class="t m" style="left:447.5px;top:135.3px;font-size:9.4px;letter-spacing:-0.041px;color:#222">stOemType;</span>
<span class="t m" style="left:322.5px;top:149px;font-size:9.4px;letter-spacing:0.073px;color:#1a1ae0">END_VAR</span>
<div class="a" style="left:1228.5px;top:285.5px;width:38px;height:16px;background:#f2f2f2;border:1px solid #c8c8c8;"></div>
<span class="t " style="left:1235px;top:285.5px;font-size:8.82px;letter-spacing:-0.000px;">100 %</span>
<div class="a" style="left:1267px;top:285.5px;width:16.5px;height:16px;background:#f4f4f4;border:1px solid #c8c8c8;"></div>
<svg class="a" style="left:1269px;top:287.5px;" width="12.5" height="12.5" viewBox="0 0 16 16"><rect x="1.500" y="6" width="8" height="8.500" fill="#eee" stroke="#222" stroke-width="1.200"/><circle cx="8" cy="6" r="4.300" fill="#bfeef0" fill-opacity=".7" stroke="#111" stroke-width="1.500"/><path d="M11 9.500l4.500 5" stroke="#111" stroke-width="2"/></svg>
<div class="a" style="left:263px;top:303px;width:1023px;height:2.3px;background:linear-gradient(#ececec,#d4d4d4);"></div>
<div class="a" style="left:263px;top:305.2px;width:1023px;height:0.8px;background:#b0b0b0;"></div>
<div class="a" style="left:263px;top:306px;width:1023px;height:3.2px;background:#f6f6f6;"></div>
<div class="a" style="left:263px;top:309.2px;width:1023px;height:0.8px;background:#b0b0b0;"></div>
<svg class="a" style="left:764px;top:305.3px;" width="7.5" height="4.5" viewBox="0 0 7.500 4.500"><path d="M0 4.500l3.750-4.500 3.750 4.500z" fill="#6e6e6e"/></svg>
<svg class="a" style="left:777px;top:305.3px;" width="8" height="4.3" viewBox="0 0 8 4.300"><path d="M0 0h8l-4 4.300z" fill="#6e6e6e"/></svg>
<div class="a" style="left:263px;top:310px;width:1009.5px;height:550px;background:#f0f2f1;"></div>
<div class="a" style="left:263px;top:860px;width:1009.5px;height:214px;background:#808080;"></div>
<span class="t" style="left:757.8px;top:326.2px;font-size:34.5px;font-weight:bold;-webkit-text-stroke:0.9px #000;line-height:40px;height:40px;transform:scaleX(.875);transform-origin:0 0;">%s</span>
<span class="t" style="left:354.6px;top:428.6px;font-size:15px;line-height:18px;height:18px;color:#3a3a3a;letter-spacing:0.2px">%s</span>
<div class="a" style="left:302.8px;top:424.8px;width:6.4px;height:6.4px;background:#7070f2;border:1.300px solid #1414f4;"></div>
<div class="a" style="left:302.8px;top:437px;width:6.4px;height:6.4px;background:#7070f2;border:1.300px solid #1414f4;"></div>
<div class="a" style="left:302.8px;top:449.2px;width:6.4px;height:6.4px;background:#7070f2;border:1.300px solid #1414f4;"></div>
<div class="a" style="left:363.5px;top:424.8px;width:6.4px;height:6.4px;background:#7070f2;border:1.300px solid #1414f4;"></div>
<div class="a" style="left:363.5px;top:449.2px;width:6.4px;height:6.4px;background:#7070f2;border:1.300px solid #1414f4;"></div>
<div class="a" style="left:424px;top:424.8px;width:6.4px;height:6.4px;background:#7070f2;border:1.300px solid #1414f4;"></div>
<div class="a" style="left:424px;top:437px;width:6.4px;height:6.4px;background:#7070f2;border:1.300px solid #1414f4;"></div>
<div class="a" style="left:424px;top:449.2px;width:6.4px;height:6.4px;background:#7070f2;border:1.300px solid #1414f4;"></div>
<svg class="a" style="left:362.9px;top:436.9px;" width="7.2" height="7.2" viewBox="0 0 8 8"><circle cx="4" cy="4" r="3.900" fill="#111"/><path d="M4 1.800v4.400M1.800 4h4.400" stroke="#fff" stroke-width="1"/></svg>
<div class="a" style="left:1272.5px;top:310px;width:14px;height:764px;background:#f0f0f0;"></div>
<div class="a" style="left:1274px;top:324px;width:11px;height:290px;background:#cdcdcd;"></div>
<svg class="a" style="left:1275.5px;top:315px;" width="8" height="5" viewBox="0 0 8 5"><path d="M.5 4.500l3.500-3.500 3.500 3.500" fill="none" stroke="#444" stroke-width="1.400"/></svg>
<svg class="a" style="left:1275.5px;top:1064px;" width="8" height="5" viewBox="0 0 8 5"><path d="M.5 .5l3.500 3.500 3.500-3.500" fill="none" stroke="#444" stroke-width="1.400"/></svg>
<div class="a" style="left:1221px;top:1058.5px;width:35.5px;height:15px;background:#f2f2f2;border:1px solid #d0d0d0;"></div>
<span class="t " style="left:1226.5px;top:1058.5px;font-size:8.40px;letter-spacing:-0.163px;">100 %</span>
<div class="a" style="left:1257px;top:1058.5px;width:15.5px;height:15px;background:#f4f4f4;border:1px solid #d0d0d0;"></div>
<svg class="a" style="left:1258.5px;top:1060px;" width="12.5" height="12.5" viewBox="0 0 16 16"><rect x="1.500" y="6" width="8" height="8.500" fill="#eee" stroke="#222" stroke-width="1.200"/><circle cx="8" cy="6" r="4.300" fill="#bfeef0" fill-opacity=".7" stroke="#111" stroke-width="1.500"/><path d="M11 9.500l4.500 5" stroke="#111" stroke-width="2"/></svg>
<div class="a" style="left:263px;top:1074px;width:1023px;height:13.5px;background:#f0f0f0;"></div>
<div class="a" style="left:277px;top:1075.5px;width:383px;height:11px;background:#cdcdcd;"></div>
<svg class="a" style="left:266px;top:1077.5px;" width="5" height="7" viewBox="0 0 5 7"><path d="M4.500 .5l-3.500 3 3.500 3" fill="none" stroke="#333" stroke-width="1.300"/></svg>
<svg class="a" style="left:1264px;top:1077.5px;" width="5" height="7" viewBox="0 0 5 7"><path d="M.5 .5l3.500 3-3.500 3" fill="none" stroke="#333" stroke-width="1.300"/></svg>
<div class="a" style="left:1291px;top:85px;width:377px;height:19px;background:#bfcddb;"></div>
<span class="t " style="left:1295px;top:86.5px;font-size:8.90px;letter-spacing:-0.058px;">Properties</span>
<svg class="a" style="left:1621px;top:92.5px;" width="7" height="4" viewBox="0 0 7 4"><path d="M0 0h7l-3.500 4z" fill="#111"/></svg>
<svg class="a" style="left:1638px;top:90px;" width="6" height="9" viewBox="0 0 6 9"><path d="M1.500 .5h3v4.500h-3zM.3 5h5.400M3 5v3.500" fill="none" stroke="#111" stroke-width="1.100"/></svg>
<svg class="a" style="left:1654px;top:91px;" width="7" height="7" viewBox="0 0 7 7"><path d="M.5 .5l6 6M6.500 .5l-6 6" stroke="#111" stroke-width="1.700"/></svg>
<div class="a" style="left:1291px;top:104px;width:377px;height:19px;background:linear-gradient(#fafafa,#f0f0f0);"></div>
<svg class="a" style="left:1298px;top:109px;" width="8.5" height="8" viewBox="0 0 8.500 8"><path d="M.3 .5h7.900l-3 3.300v3.700l-1.900-1v-2.700z" fill="#666" stroke="#333" stroke-width=".8"/></svg>
<span class="t " style="left:1309px;top:105.5px;font-size:9.23px;letter-spacing:0.000px;">Filter</span>
<svg class="a" style="left:1333.5px;top:112px;" width="5" height="3" viewBox="0 0 5 3"><path d="M0 0h5l-2.500 3z" fill="#222"/></svg>
<div class="a" style="left:1344px;top:107px;width:1px;height:13px;background:#c8c8c8;"></div>
<svg class="a" style="left:1351px;top:107px;" width="10" height="11" viewBox="0 0 10 11"><path d="M1 2l3 3-3 3z" fill="#1a2ab0"/><path d="M7 .5l2 2-2 2-2-2zM7 6l2 2-2 2-2-2z" fill="#20a080"/></svg>
<span class="t " style="left:1363.5px;top:105.5px;font-size:8.84px;letter-spacing:0.000px;">Sort by</span>
<svg class="a" style="left:1396.5px;top:112px;" width="5" height="3" viewBox="0 0 5 3"><path d="M0 0h5l-2.500 3z" fill="#222"/></svg>
<svg class="a" style="left:1406.5px;top:105.5px;" width="12" height="14" viewBox="0 0 12 14"><text x="0" y="6.300" font-size="8" font-weight="bold" font-family="Liberation Sans,sans-serif" fill="#2a3ab8">A</text><text x="0" y="13.600" font-size="8" font-weight="bold" font-family="Liberation Sans,sans-serif" fill="#c02030">Z</text><path d="M9 1v11M9 13l-2-3h4z" stroke="#333" fill="#333" stroke-width="1"/></svg>
<span class="t " style="left:1420.5px;top:105.5px;font-size:8.88px;letter-spacing:0.000px;">Sort order</span>
<svg class="a" style="left:1465.5px;top:112px;" width="5" height="3" viewBox="0 0 5 3"><path d="M0 0h5l-2.500 3z" fill="#222"/></svg>
<div class="a" style="left:1476px;top:107.5px;width:11px;height:11px;background:#ffffff;border:1px solid #3a6aa8;"></div>
<svg class="a" style="left:1478px;top:109.5px;" width="7" height="7" viewBox="0 0 7 7"><path d="M.8 3.500l2 2.500 3.500-5" fill="none" stroke="#20a020" stroke-width="1.500"/></svg>
<span class="t " style="left:1490px;top:105.5px;font-size:8.65px;letter-spacing:-0.060px;">Advanced</span>
<div class="a" style="left:1290px;top:123.5px;width:377.5px;height:893.5px;background:#ffffff;border:1px solid #828282;"></div>
<span class="t " style="left:1296px;top:126px;font-size:9.66px;letter-spacing:0.000px;">Property</span>
<span class="t " style="left:1518.3px;top:126px;font-size:9.07px;letter-spacing:-0.006px;">Value</span>
<div class="a" style="left:1307.5px;top:143.4px;width:359px;height:15.358px;background:#efefef;"></div>
<div class="a" style="left:1291px;top:157.958px;width:375.5px;height:1px;background:#e4e4e4;"></div>
<div class="a" style="left:1513.7px;top:143.4px;width:1px;height:15.358px;background:#e4e4e4;"></div>
<span class="t " style="left:1311px;top:143.179px;font-size:8.57px;letter-spacing:-0.103px;">Element name</span>
<span class="t " style="left:1517.5px;top:143.179px;font-size:8.62px;letter-spacing:0.000px;">GenElemInst_137</span>
<div class="a" style="left:1291px;top:173.316px;width:375.5px;height:1px;background:#e4e4e4;"></div>
<div class="a" style="left:1513.7px;top:158.758px;width:1px;height:15.358px;background:#e4e4e4;"></div>
<span class="t " style="left:1311px;top:158.537px;font-size:8.85px;letter-spacing:-0.000px;">Type of element</span>
<span class="t " style="left:1517.5px;top:158.537px;font-size:8.81px;letter-spacing:0.000px;">Frame -&gt; JCmpVisuBasic.Outputst...</span>
<div class="a" style="left:1291px;top:188.674px;width:375.5px;height:1px;background:#e4e4e4;"></div>
<div class="a" style="left:1513.7px;top:174.116px;width:1px;height:15.358px;background:#e4e4e4;"></div>
<span class="t " style="left:1311px;top:173.895px;font-size:8.57px;letter-spacing:-0.120px;">Clipping</span>
<div class="a" style="left:1585.5px;top:176.595px;width:10.5px;height:10.5px;background:#ffffff;border:1px solid #333;"></div>
<div class="a" style="left:1291px;top:204.032px;width:375.5px;height:1px;background:#e4e4e4;"></div>
<div class="a" style="left:1513.7px;top:189.474px;width:1px;height:15.358px;background:#e4e4e4;"></div>
<span class="t " style="left:1311px;top:189.253px;font-size:8.62px;letter-spacing:0.000px;">Show frame</span>
<span class="t " style="left:1517.5px;top:189.253px;font-size:8.75px;letter-spacing:0.000px;">No frame</span>
<div class="a" style="left:1291px;top:219.39px;width:375.5px;height:1px;background:#e4e4e4;"></div>
<div class="a" style="left:1513.7px;top:204.832px;width:1px;height:15.358px;background:#e4e4e4;"></div>
<span class="t " style="left:1311px;top:204.611px;font-size:8.63px;letter-spacing:0.000px;">Scaling type</span>
<span class="t " style="left:1517.5px;top:204.611px;font-size:8.69px;letter-spacing:0.000px;">Anisotropic</span>
<div class="a" style="left:1291px;top:234.748px;width:375.5px;height:1px;background:#e4e4e4;"></div>
<div class="a" style="left:1513.7px;top:220.19px;width:1px;height:15.358px;background:#e4e4e4;"></div>
<span class="t " style="left:1311px;top:219.969px;font-size:8.84px;letter-spacing:0.000px;">Deactivate the background drawing</span>
<div class="a" style="left:1585.5px;top:222.669px;width:10.5px;height:10.5px;background:#ffffff;border:1px solid #333;"></div>
<div class="a" style="left:1291px;top:250.106px;width:375.5px;height:1px;background:#e4e4e4;"></div>
<div class="a" style="left:1513.7px;top:235.548px;width:1px;height:15.358px;background:#e4e4e4;"></div>
<span class="t " style="left:1311px;top:235.327px;font-size:8.80px;letter-spacing:0.000px;">References</span>
<svg class="a" style="left:1295.2px;top:238.027px;" width="7.4" height="7.4" viewBox="0 0 9 9"><rect x=".6" y=".6" width="7.800" height="7.800" rx="1.300" fill="#fff" stroke="#a6cfd0" stroke-width="1.100"/><rect x="1.300" y="5.200" width="6.400" height="2.500" fill="#e6e8e8"/><path d="M2.200 4.600h4.600" stroke="#2a2a2a" stroke-width="1.500"/></svg>
<div class="a" style="left:1564px;top:236.3px;width:53.8px;height:13.6px;background:#f0f0f0;border-top:1px solid #fff;border-left:1px solid #fff;border-right:1.300px solid #555;border-bottom:1.300px solid #555;box-shadow:inset -1px -1px 0 #a0a0a0;"></div>
<span class="t " style="left:1569.5px;top:234.3px;font-size:9.19px;letter-spacing:-0.000px;">Configure...</span>
<div class="a" style="left:1324px;top:250.906px;width:342.5px;height:15.358px;background:#e0e0e0;"></div>
<div class="a" style="left:1291px;top:265.464px;width:33px;height:1px;background:#e4e4e4;"></div>
<svg class="a" style="left:1311.1px;top:253.385px;" width="7.4" height="7.4" viewBox="0 0 9 9"><rect x=".6" y=".6" width="7.800" height="7.800" rx="1.300" fill="#fff" stroke="#a6cfd0" stroke-width="1.100"/><rect x="1.300" y="5.200" width="6.400" height="2.500" fill="#e6e8e8"/><path d="M2.200 4.600h4.600" stroke="#2a2a2a" stroke-width="1.500"/></svg>
<span class="t " style="left:1325px;top:250.685px;font-size:9.02px;letter-spacing:0.000px;">JCmpVisuBasic.OutputstDintValue</span>
<span class="t " style="left:1517.5px;top:250.685px;font-size:8.99px;letter-spacing:0.000px;">0</span>
<div class="a" style="left:1291px;top:280.822px;width:375.5px;height:1px;background:#e4e4e4;"></div>
<div class="a" style="left:1513.7px;top:266.264px;width:1px;height:15.358px;background:#e4e4e4;"></div>
<span class="t " style="left:1343px;top:266.043px;font-size:8.73px;letter-spacing:0.000px;">stDintValue</span>
<span class="t " style="left:1517.5px;top:266.043px;font-size:8.57px;letter-spacing:-0.053px;">PLC_Main.stDintValue</span>
<div class="a" style="left:1291px;top:296.18px;width:375.5px;height:1px;background:#e4e4e4;"></div>
<div class="a" style="left:1513.7px;top:281.622px;width:1px;height:15.358px;background:#e4e4e4;"></div>
<span class="t " style="left:1343px;top:281.401px;font-size:8.67px;letter-spacing:0.000px;">wsUnit</span>
<span class="t " style="left:1517.5px;top:281.401px;font-size:9.46px;letter-spacing:0.000px;">&quot;ºC&quot;</span>
<div class="a" style="left:1291px;top:311.538px;width:375.5px;height:1px;background:#e4e4e4;"></div>
<div class="a" style="left:1513.7px;top:296.98px;width:1px;height:15.358px;background:#e4e4e4;"></div>
<span class="t " style="left:1343px;top:296.759px;font-size:9.00px;letter-spacing:0.000px;">dwTextAlignment</span>
<span class="t " style="left:1517.5px;top:296.759px;font-size:8.99px;letter-spacing:0.000px;">5</span>
<div class="a" style="left:1307.5px;top:312.338px;width:359px;height:15.358px;background:#e0e0e0;"></div>
<div class="a" style="left:1291px;top:326.896px;width:16.5px;height:1px;background:#e4e4e4;"></div>
<svg class="a" style="left:1295.2px;top:314.817px;" width="7.4" height="7.4" viewBox="0 0 9 9"><rect x=".6" y=".6" width="7.800" height="7.800" rx="1.300" fill="#fff" stroke="#a6cfd0" stroke-width="1.100"/><rect x="1.300" y="5.200" width="6.400" height="2.500" fill="#e6e8e8"/><path d="M2.200 4.600h4.600" stroke="#2a2a2a" stroke-width="1.500"/></svg>
<span class="t " style="left:1309.3px;top:312.117px;font-size:9.28px;letter-spacing:0.000px;">Position</span>
<div class="a" style="left:1291px;top:342.254px;width:375.5px;height:1px;background:#e4e4e4;"></div>
<div class="a" style="left:1513.7px;top:327.696px;width:1px;height:15.358px;background:#e4e4e4;"></div>
<span class="t " style="left:1327px;top:327.475px;font-size:8.57px;letter-spacing:-0.215px;">X</span>
<span class="t " style="left:1517.5px;top:327.475px;font-size:8.99px;letter-spacing:0.000px;">54</span>
<div class="a" style="left:1291px;top:357.612px;width:375.5px;height:1px;background:#e4e4e4;"></div>
<div class="a" style="left:1513.7px;top:343.054px;width:1px;height:15.358px;background:#e4e4e4;"></div>
<span class="t " style="left:1327px;top:342.833px;font-size:8.57px;letter-spacing:-0.215px;">Y</span>
<span class="t " style="left:1517.5px;top:342.833px;font-size:8.99px;letter-spacing:0.000px;">146</span>
<div class="a" style="left:1291px;top:372.97px;width:375.5px;height:1px;background:#e4e4e4;"></div>
<div class="a" style="left:1513.7px;top:358.412px;width:1px;height:15.358px;background:#e4e4e4;"></div>
<span class="t " style="left:1327px;top:358.191px;font-size:9.00px;letter-spacing:0.000px;">Width</span>
<span class="t " style="left:1517.5px;top:358.191px;font-size:8.99px;letter-spacing:0.000px;">150</span>
<div class="a" style="left:1291px;top:388.328px;width:375.5px;height:1px;background:#e4e4e4;"></div>
<div class="a" style="left:1513.7px;top:373.77px;width:1px;height:15.358px;background:#e4e4e4;"></div>
<span class="t " style="left:1327px;top:373.549px;font-size:8.82px;letter-spacing:0.000px;">Height</span>
<span class="t " style="left:1517.5px;top:373.549px;font-size:8.99px;letter-spacing:0.000px;">30</span>
<div class="a" style="left:1307.5px;top:389.128px;width:359px;height:15.358px;background:#e0e0e0;"></div>
<div class="a" style="left:1291px;top:403.686px;width:16.5px;height:1px;background:#e4e4e4;"></div>
<svg class="a" style="left:1295.2px;top:391.607px;" width="7.4" height="7.4" viewBox="0 0 9 9"><rect x=".6" y=".6" width="7.800" height="7.800" rx="1.300" fill="#fff" stroke="#a6cfd0" stroke-width="1.100"/><rect x="1.300" y="5.200" width="6.400" height="2.500" fill="#e6e8e8"/><path d="M2.200 4.600h4.600" stroke="#2a2a2a" stroke-width="1.500"/><path d="M4.500 2.300v4.600" stroke="#2a2a2a" stroke-width="1.300"/></svg>
<span class="t " style="left:1309.3px;top:388.907px;font-size:9.00px;letter-spacing:0.000px;">Center</span>
<div class="a" style="left:1307.5px;top:404.486px;width:359px;height:15.358px;background:#e0e0e0;"></div>
<div class="a" style="left:1291px;top:419.044px;width:16.5px;height:1px;background:#e4e4e4;"></div>
<svg class="a" style="left:1295.2px;top:406.965px;" width="7.4" height="7.4" viewBox="0 0 9 9"><rect x=".6" y=".6" width="7.800" height="7.800" rx="1.300" fill="#fff" stroke="#a6cfd0" stroke-width="1.100"/><rect x="1.300" y="5.200" width="6.400" height="2.500" fill="#e6e8e8"/><path d="M2.200 4.600h4.600" stroke="#2a2a2a" stroke-width="1.500"/><path d="M4.500 2.300v4.600" stroke="#2a2a2a" stroke-width="1.300"/></svg>
<span class="t " style="left:1309.3px;top:404.265px;font-size:9.00px;letter-spacing:0.000px;">Colors</span>
<div class="a" style="left:1307.5px;top:419.844px;width:359px;height:15.358px;background:#e0e0e0;"></div>
<div class="a" style="left:1291px;top:434.402px;width:16.5px;height:1px;background:#e4e4e4;"></div>
<svg class="a" style="left:1295.2px;top:422.323px;" width="7.4" height="7.4" viewBox="0 0 9 9"><rect x=".6" y=".6" width="7.800" height="7.800" rx="1.300" fill="#fff" stroke="#a6cfd0" stroke-width="1.100"/><rect x="1.300" y="5.200" width="6.400" height="2.500" fill="#e6e8e8"/><path d="M2.200 4.600h4.600" stroke="#2a2a2a" stroke-width="1.500"/><path d="M4.500 2.300v4.600" stroke="#2a2a2a" stroke-width="1.300"/></svg>
<span class="t " style="left:1309.3px;top:419.623px;font-size:9.09px;letter-spacing:0.000px;">Appearance</span>
<div class="a" style="left:1307.5px;top:435.202px;width:359px;height:15.358px;background:#e0e0e0;"></div>
<div class="a" style="left:1291px;top:449.76px;width:16.5px;height:1px;background:#e4e4e4;"></div>
<svg class="a" style="left:1295.2px;top:437.681px;" width="7.4" height="7.4" viewBox="0 0 9 9"><rect x=".6" y=".6" width="7.800" height="7.800" rx="1.300" fill="#fff" stroke="#a6cfd0" stroke-width="1.100"/><rect x="1.300" y="5.200" width="6.400" height="2.500" fill="#e6e8e8"/><path d="M2.200 4.600h4.600" stroke="#2a2a2a" stroke-width="1.500"/></svg>
<span class="t " style="left:1309.3px;top:434.981px;font-size:9.00px;letter-spacing:0.000px;">Texts</span>
<div class="a" style="left:1291px;top:465.118px;width:375.5px;height:1px;background:#e4e4e4;"></div>
<div class="a" style="left:1513.7px;top:450.56px;width:1px;height:15.358px;background:#e4e4e4;"></div>
<span class="t " style="left:1327px;top:450.339px;font-size:9.82px;letter-spacing:0.000px;">Text</span>
<div class="a" style="left:1291px;top:480.476px;width:375.5px;height:1px;background:#e4e4e4;"></div>
<div class="a" style="left:1513.7px;top:465.918px;width:1px;height:15.358px;background:#e4e4e4;"></div>
<span class="t " style="left:1327px;top:465.697px;font-size:9.00px;letter-spacing:0.000px;">Tooltip</span>
<div class="a" style="left:1307.5px;top:481.276px;width:359px;height:15.358px;background:#e0e0e0;"></div>
<div class="a" style="left:1291px;top:495.834px;width:16.5px;height:1px;background:#e4e4e4;"></div>
<svg class="a" style="left:1295.2px;top:483.755px;" width="7.4" height="7.4" viewBox="0 0 9 9"><rect x=".6" y=".6" width="7.800" height="7.800" rx="1.300" fill="#fff" stroke="#a6cfd0" stroke-width="1.100"/><rect x="1.300" y="5.200" width="6.400" height="2.500" fill="#e6e8e8"/><path d="M2.200 4.600h4.600" stroke="#2a2a2a" stroke-width="1.500"/></svg>
<span class="t " style="left:1309.3px;top:481.055px;font-size:9.53px;letter-spacing:0.000px;">Text properties</span>
<div class="a" style="left:1291px;top:511.192px;width:375.5px;height:1px;background:#e4e4e4;"></div>
<div class="a" style="left:1513.7px;top:496.634px;width:1px;height:15.358px;background:#e4e4e4;"></div>
<span class="t " style="left:1327px;top:496.413px;font-size:8.67px;letter-spacing:-0.000px;">Horizontal alignment</span>
<span class="t " style="left:1517.5px;top:496.413px;font-size:8.99px;letter-spacing:-0.000px;">Centered</span>
<div class="a" style="left:1291px;top:526.55px;width:375.5px;height:1px;background:#e4e4e4;"></div>
<div class="a" style="left:1513.7px;top:511.992px;width:1px;height:15.358px;background:#e4e4e4;"></div>
<span class="t " style="left:1327px;top:511.771px;font-size:8.68px;letter-spacing:0.000px;">Vertical alignment</span>
<span class="t " style="left:1517.5px;top:511.771px;font-size:8.99px;letter-spacing:-0.000px;">Centered</span>
<div class="a" style="left:1291px;top:541.908px;width:375.5px;height:1px;background:#e4e4e4;"></div>
<div class="a" style="left:1513.7px;top:527.35px;width:1px;height:15.358px;background:#e4e4e4;"></div>
<span class="t " style="left:1327px;top:527.129px;font-size:9.40px;letter-spacing:-0.000px;">Text format</span>
<span class="t " style="left:1517.5px;top:527.129px;font-size:9.15px;letter-spacing:0.000px;">Default</span>
<div class="a" style="left:1291px;top:557.266px;width:375.5px;height:1px;background:#e4e4e4;"></div>
<div class="a" style="left:1513.7px;top:542.708px;width:1px;height:15.358px;background:#e4e4e4;"></div>
<span class="t " style="left:1327px;top:542.487px;font-size:9.00px;letter-spacing:-0.000px;">Font</span>
<span class="t " style="left:1517.5px;top:542.487px;font-size:9.15px;letter-spacing:0.000px;">Default</span>
<div class="a" style="left:1291px;top:572.624px;width:375.5px;height:1px;background:#e4e4e4;"></div>
<div class="a" style="left:1513.7px;top:558.066px;width:1px;height:15.358px;background:#e4e4e4;"></div>
<span class="t " style="left:1327px;top:557.845px;font-size:8.77px;letter-spacing:0.000px;">Font color</span>
<svg class="a" style="left:1311.1px;top:560.545px;" width="7.4" height="7.4" viewBox="0 0 9 9"><rect x=".6" y=".6" width="7.800" height="7.800" rx="1.300" fill="#fff" stroke="#a6cfd0" stroke-width="1.100"/><rect x="1.300" y="5.200" width="6.400" height="2.500" fill="#e6e8e8"/><path d="M2.200 4.600h4.600" stroke="#2a2a2a" stroke-width="1.500"/></svg>
<div class="a" style="left:1517px;top:561.045px;width:25px;height:9.5px;background:#000000;"></div>
<span class="t " style="left:1550px;top:557.845px;font-size:9.36px;letter-spacing:-0.000px;">Fontcolor</span>
<div class="a" style="left:1291px;top:587.982px;width:375.5px;height:1px;background:#e4e4e4;"></div>
<div class="a" style="left:1513.7px;top:573.424px;width:1px;height:15.358px;background:#e4e4e4;"></div>
<span class="t " style="left:1343px;top:573.203px;font-size:8.89px;letter-spacing:0.000px;">Transparency</span>
<span class="t " style="left:1517.5px;top:573.203px;font-size:8.99px;letter-spacing:0.000px;">255</span>
<div class="a" style="left:1307.5px;top:588.782px;width:359px;height:15.358px;background:#e0e0e0;"></div>
<div class="a" style="left:1291px;top:603.34px;width:16.5px;height:1px;background:#e4e4e4;"></div>
<svg class="a" style="left:1295.2px;top:591.261px;" width="7.4" height="7.4" viewBox="0 0 9 9"><rect x=".6" y=".6" width="7.800" height="7.800" rx="1.300" fill="#fff" stroke="#a6cfd0" stroke-width="1.100"/><rect x="1.300" y="5.200" width="6.400" height="2.500" fill="#e6e8e8"/><path d="M2.200 4.600h4.600" stroke="#2a2a2a" stroke-width="1.500"/><path d="M4.500 2.300v4.600" stroke="#2a2a2a" stroke-width="1.300"/></svg>
<span class="t " style="left:1309.3px;top:588.561px;font-size:9.28px;letter-spacing:0.000px;">Absolute movement</span>
<div class="a" style="left:1307.5px;top:604.14px;width:359px;height:15.358px;background:#e0e0e0;"></div>
<div class="a" style="left:1291px;top:618.698px;width:16.5px;height:1px;background:#e4e4e4;"></div>
<svg class="a" style="left:1295.2px;top:606.619px;" width="7.4" height="7.4" viewBox="0 0 9 9"><rect x=".6" y=".6" width="7.800" height="7.800" rx="1.300" fill="#fff" stroke="#a6cfd0" stroke-width="1.100"/><rect x="1.300" y="5.200" width="6.400" height="2.500" fill="#e6e8e8"/><path d="M2.200 4.600h4.600" stroke="#2a2a2a" stroke-width="1.500"/><path d="M4.500 2.300v4.600" stroke="#2a2a2a" stroke-width="1.300"/></svg>
<span class="t " style="left:1309.3px;top:603.919px;font-size:9.23px;letter-spacing:0.000px;">Relative movement</span>
<div class="a" style="left:1307.5px;top:619.498px;width:359px;height:15.358px;background:#e0e0e0;"></div>
<div class="a" style="left:1291px;top:634.056px;width:16.5px;height:1px;background:#e4e4e4;"></div>
<svg class="a" style="left:1295.2px;top:621.977px;" width="7.4" height="7.4" viewBox="0 0 9 9"><rect x=".6" y=".6" width="7.800" height="7.800" rx="1.300" fill="#fff" stroke="#a6cfd0" stroke-width="1.100"/><rect x="1.300" y="5.200" width="6.400" height="2.500" fill="#e6e8e8"/><path d="M2.200 4.600h4.600" stroke="#2a2a2a" stroke-width="1.500"/></svg>
<span class="t " style="left:1309.3px;top:619.277px;font-size:9.32px;letter-spacing:0.000px;">Text variables</span>
<div class="a" style="left:1291px;top:649.414px;width:375.5px;height:1px;background:#e4e4e4;"></div>
<div class="a" style="left:1513.7px;top:634.856px;width:1px;height:15.358px;background:#e4e4e4;"></div>
<span class="t " style="left:1327px;top:634.635px;font-size:9.09px;letter-spacing:0.000px;">Text variable</span>
<div class="a" style="left:1291px;top:664.772px;width:375.5px;height:1px;background:#e4e4e4;"></div>
<div class="a" style="left:1513.7px;top:650.214px;width:1px;height:15.358px;background:#e4e4e4;"></div>
<span class="t " style="left:1327px;top:649.993px;font-size:8.85px;letter-spacing:0.000px;">Tooltip variable</span>
<div class="a" style="left:1307.5px;top:665.572px;width:359px;height:15.358px;background:#e0e0e0;"></div>
<div class="a" style="left:1291px;top:680.13px;width:16.5px;height:1px;background:#e4e4e4;"></div>
<svg class="a" style="left:1295.2px;top:668.051px;" width="7.4" height="7.4" viewBox="0 0 9 9"><rect x=".6" y=".6" width="7.800" height="7.800" rx="1.300" fill="#fff" stroke="#a6cfd0" stroke-width="1.100"/><rect x="1.300" y="5.200" width="6.400" height="2.500" fill="#e6e8e8"/><path d="M2.200 4.600h4.600" stroke="#2a2a2a" stroke-width="1.500"/><path d="M4.500 2.300v4.600" stroke="#2a2a2a" stroke-width="1.300"/></svg>
<span class="t " style="left:1309.3px;top:665.351px;font-size:9.08px;letter-spacing:0.000px;">Dynamic texts</span>
<div class="a" style="left:1307.5px;top:680.93px;width:359px;height:15.358px;background:#e0e0e0;"></div>
<div class="a" style="left:1291px;top:695.488px;width:16.5px;height:1px;background:#e4e4e4;"></div>
<svg class="a" style="left:1295.2px;top:683.409px;" width="7.4" height="7.4" viewBox="0 0 9 9"><rect x=".6" y=".6" width="7.800" height="7.800" rx="1.300" fill="#fff" stroke="#a6cfd0" stroke-width="1.100"/><rect x="1.300" y="5.200" width="6.400" height="2.500" fill="#e6e8e8"/><path d="M2.200 4.600h4.600" stroke="#2a2a2a" stroke-width="1.500"/><path d="M4.500 2.300v4.600" stroke="#2a2a2a" stroke-width="1.300"/></svg>
<span class="t " style="left:1309.3px;top:680.709px;font-size:9.24px;letter-spacing:0.000px;">Font variables</span>
<div class="a" style="left:1307.5px;top:696.288px;width:359px;height:15.358px;background:#e0e0e0;"></div>
<div class="a" style="left:1291px;top:710.846px;width:16.5px;height:1px;background:#e4e4e4;"></div>
<svg class="a" style="left:1295.2px;top:698.767px;" width="7.4" height="7.4" viewBox="0 0 9 9"><rect x=".6" y=".6" width="7.800" height="7.800" rx="1.300" fill="#fff" stroke="#a6cfd0" stroke-width="1.100"/><rect x="1.300" y="5.200" width="6.400" height="2.500" fill="#e6e8e8"/><path d="M2.200 4.600h4.600" stroke="#2a2a2a" stroke-width="1.500"/><path d="M4.500 2.300v4.600" stroke="#2a2a2a" stroke-width="1.300"/></svg>
<span class="t " style="left:1309.3px;top:696.067px;font-size:9.00px;letter-spacing:0.000px;">Color variables</span>
<div class="a" style="left:1307.5px;top:711.646px;width:359px;height:15.358px;background:#e0e0e0;"></div>
<div class="a" style="left:1291px;top:726.204px;width:16.5px;height:1px;background:#e4e4e4;"></div>
<svg class="a" style="left:1295.2px;top:714.125px;" width="7.4" height="7.4" viewBox="0 0 9 9"><rect x=".6" y=".6" width="7.800" height="7.800" rx="1.300" fill="#fff" stroke="#a6cfd0" stroke-width="1.100"/><rect x="1.300" y="5.200" width="6.400" height="2.500" fill="#e6e8e8"/><path d="M2.200 4.600h4.600" stroke="#2a2a2a" stroke-width="1.500"/><path d="M4.500 2.300v4.600" stroke="#2a2a2a" stroke-width="1.300"/></svg>
<span class="t " style="left:1309.3px;top:711.425px;font-size:8.99px;letter-spacing:0.000px;">Appearance variables</span>
<div class="a" style="left:1307.5px;top:727.004px;width:359px;height:15.358px;background:#e0e0e0;"></div>
<div class="a" style="left:1291px;top:741.562px;width:16.5px;height:1px;background:#e4e4e4;"></div>
<svg class="a" style="left:1295.2px;top:729.483px;" width="7.4" height="7.4" viewBox="0 0 9 9"><rect x=".6" y=".6" width="7.800" height="7.800" rx="1.300" fill="#fff" stroke="#a6cfd0" stroke-width="1.100"/><rect x="1.300" y="5.200" width="6.400" height="2.500" fill="#e6e8e8"/><path d="M2.200 4.600h4.600" stroke="#2a2a2a" stroke-width="1.500"/><path d="M4.500 2.300v4.600" stroke="#2a2a2a" stroke-width="1.300"/></svg>
<span class="t " style="left:1309.3px;top:726.783px;font-size:9.15px;letter-spacing:-0.000px;">Switch frame variable</span>
<div class="a" style="left:1307.5px;top:742.362px;width:359px;height:15.358px;background:#e0e0e0;"></div>
<div class="a" style="left:1291px;top:756.92px;width:16.5px;height:1px;background:#e4e4e4;"></div>
<svg class="a" style="left:1295.2px;top:744.841px;" width="7.4" height="7.4" viewBox="0 0 9 9"><rect x=".6" y=".6" width="7.800" height="7.800" rx="1.300" fill="#fff" stroke="#a6cfd0" stroke-width="1.100"/><rect x="1.300" y="5.200" width="6.400" height="2.500" fill="#e6e8e8"/><path d="M2.200 4.600h4.600" stroke="#2a2a2a" stroke-width="1.500"/></svg>
<span class="t " style="left:1309.3px;top:742.141px;font-size:9.07px;letter-spacing:-0.000px;">State variables</span>
<div class="a" style="left:1291px;top:772.278px;width:375.5px;height:1px;background:#e4e4e4;"></div>
<div class="a" style="left:1513.7px;top:757.72px;width:1px;height:15.358px;background:#e4e4e4;"></div>
<span class="t " style="left:1327px;top:757.499px;font-size:8.86px;letter-spacing:0.000px;">Invisible</span>
<div class="a" style="left:1291px;top:787.636px;width:375.5px;height:1px;background:#e4e4e4;"></div>
<div class="a" style="left:1513.7px;top:773.078px;width:1px;height:15.358px;background:#e4e4e4;"></div>
<span class="t " style="left:1327px;top:772.857px;font-size:8.93px;letter-spacing:-0.000px;">Deactivate inputs</span>
<div class="a" style="left:1307.5px;top:788.436px;width:359px;height:15.358px;background:#e0e0e0;"></div>
<div class="a" style="left:1291px;top:802.994px;width:16.5px;height:1px;background:#e4e4e4;"></div>
<svg class="a" style="left:1295.2px;top:790.915px;" width="7.4" height="7.4" viewBox="0 0 9 9"><rect x=".6" y=".6" width="7.800" height="7.800" rx="1.300" fill="#fff" stroke="#a6cfd0" stroke-width="1.100"/><rect x="1.300" y="5.200" width="6.400" height="2.500" fill="#e6e8e8"/><path d="M2.200 4.600h4.600" stroke="#2a2a2a" stroke-width="1.500"/></svg>
<span class="t " style="left:1309.3px;top:788.215px;font-size:9.60px;letter-spacing:0.000px;">Input configuration</span>
<div class="a" style="left:1291px;top:818.352px;width:375.5px;height:1px;background:#e4e4e4;"></div>
<div class="a" style="left:1513.7px;top:803.794px;width:1px;height:15.358px;background:#e4e4e4;"></div>
<span class="t " style="left:1327px;top:803.573px;font-size:8.57px;letter-spacing:-0.099px;">OnDialogClosed</span>
<span class="t " style="left:1517.5px;top:803.573px;font-size:9.19px;letter-spacing:-0.000px;">Configure...</span>
<div class="a" style="left:1291px;top:833.71px;width:375.5px;height:1px;background:#e4e4e4;"></div>
<div class="a" style="left:1513.7px;top:819.152px;width:1px;height:15.358px;background:#e4e4e4;"></div>
<span class="t " style="left:1327px;top:818.931px;font-size:8.57px;letter-spacing:-0.142px;">OnMouseClick</span>
<span class="t " style="left:1517.5px;top:818.931px;font-size:9.19px;letter-spacing:-0.000px;">Configure...</span>
<div class="a" style="left:1291px;top:849.068px;width:375.5px;height:1px;background:#e4e4e4;"></div>
<div class="a" style="left:1513.7px;top:834.51px;width:1px;height:15.358px;background:#e4e4e4;"></div>
<span class="t " style="left:1327px;top:834.289px;font-size:8.57px;letter-spacing:-0.050px;">OnMouseDown</span>
<span class="t " style="left:1517.5px;top:834.289px;font-size:9.19px;letter-spacing:-0.000px;">Configure...</span>
<div class="a" style="left:1291px;top:864.426px;width:375.5px;height:1px;background:#e4e4e4;"></div>
<div class="a" style="left:1513.7px;top:849.868px;width:1px;height:15.358px;background:#e4e4e4;"></div>
<span class="t " style="left:1327px;top:849.647px;font-size:8.57px;letter-spacing:-0.010px;">OnMouseEnter</span>
<span class="t " style="left:1517.5px;top:849.647px;font-size:9.19px;letter-spacing:-0.000px;">Configure...</span>
<div class="a" style="left:1291px;top:879.784px;width:375.5px;height:1px;background:#e4e4e4;"></div>
<div class="a" style="left:1513.7px;top:865.226px;width:1px;height:15.358px;background:#e4e4e4;"></div>
<span class="t " style="left:1327px;top:865.005px;font-size:8.57px;letter-spacing:-0.041px;">OnMouseLeave</span>
<span class="t " style="left:1517.5px;top:865.005px;font-size:9.19px;letter-spacing:-0.000px;">Configure...</span>
<div class="a" style="left:1291px;top:895.142px;width:375.5px;height:1px;background:#e4e4e4;"></div>
<div class="a" style="left:1513.7px;top:880.584px;width:1px;height:15.358px;background:#e4e4e4;"></div>
<span class="t " style="left:1327px;top:880.363px;font-size:8.57px;letter-spacing:-0.054px;">OnMouseMove</span>
<span class="t " style="left:1517.5px;top:880.363px;font-size:9.19px;letter-spacing:-0.000px;">Configure...</span>
<div class="a" style="left:1291px;top:910.5px;width:375.5px;height:1px;background:#e4e4e4;"></div>
<div class="a" style="left:1513.7px;top:895.942px;width:1px;height:15.358px;background:#e4e4e4;"></div>
<span class="t " style="left:1327px;top:895.721px;font-size:8.57px;letter-spacing:-0.066px;">OnMouseUp</span>
<span class="t " style="left:1517.5px;top:895.721px;font-size:9.19px;letter-spacing:-0.000px;">Configure...</span>
<div class="a" style="left:1291px;top:925.858px;width:375.5px;height:1px;background:#e4e4e4;"></div>
<div class="a" style="left:1513.7px;top:911.3px;width:1px;height:15.358px;background:#e4e4e4;"></div>
<span class="t " style="left:1327px;top:911.079px;font-size:8.57px;letter-spacing:0.000px;">OnValueChanged</span>
<span class="t " style="left:1517.5px;top:911.079px;font-size:9.19px;letter-spacing:-0.000px;">Configure...</span>
<div class="a" style="left:1324px;top:926.658px;width:342.5px;height:15.358px;background:#e0e0e0;"></div>
<div class="a" style="left:1291px;top:941.216px;width:33px;height:1px;background:#e4e4e4;"></div>
<svg class="a" style="left:1311.1px;top:929.137px;" width="7.4" height="7.4" viewBox="0 0 9 9"><rect x=".6" y=".6" width="7.800" height="7.800" rx="1.300" fill="#fff" stroke="#a6cfd0" stroke-width="1.100"/><rect x="1.300" y="5.200" width="6.400" height="2.500" fill="#e6e8e8"/><path d="M2.200 4.600h4.600" stroke="#2a2a2a" stroke-width="1.500"/><path d="M4.500 2.300v4.600" stroke="#2a2a2a" stroke-width="1.300"/></svg>
<span class="t " style="left:1325.5px;top:926.437px;font-size:9.84px;letter-spacing:0.000px;">Toggle</span>
<div class="a" style="left:1324px;top:942.016px;width:342.5px;height:15.358px;background:#e0e0e0;"></div>
<div class="a" style="left:1291px;top:956.574px;width:33px;height:1px;background:#e4e4e4;"></div>
<svg class="a" style="left:1311.1px;top:944.495px;" width="7.4" height="7.4" viewBox="0 0 9 9"><rect x=".6" y=".6" width="7.800" height="7.800" rx="1.300" fill="#fff" stroke="#a6cfd0" stroke-width="1.100"/><rect x="1.300" y="5.200" width="6.400" height="2.500" fill="#e6e8e8"/><path d="M2.200 4.600h4.600" stroke="#2a2a2a" stroke-width="1.500"/><path d="M4.500 2.300v4.600" stroke="#2a2a2a" stroke-width="1.300"/></svg>
<span class="t " style="left:1325.5px;top:941.795px;font-size:9.30px;letter-spacing:0.000px;">Tap</span>
<div class="a" style="left:1324px;top:957.374px;width:342.5px;height:15.358px;background:#e0e0e0;"></div>
<div class="a" style="left:1291px;top:971.932px;width:33px;height:1px;background:#e4e4e4;"></div>
<svg class="a" style="left:1311.1px;top:959.853px;" width="7.4" height="7.4" viewBox="0 0 9 9"><rect x=".6" y=".6" width="7.800" height="7.800" rx="1.300" fill="#fff" stroke="#a6cfd0" stroke-width="1.100"/><rect x="1.300" y="5.200" width="6.400" height="2.500" fill="#e6e8e8"/><path d="M2.200 4.600h4.600" stroke="#2a2a2a" stroke-width="1.500"/><path d="M4.500 2.300v4.600" stroke="#2a2a2a" stroke-width="1.300"/></svg>
<span class="t " style="left:1325.5px;top:957.153px;font-size:9.48px;letter-spacing:0.000px;">Hotkey</span>
<div class="a" style="left:1293px;top:232.2px;width:373.2px;height:94.6px;border:3px solid #f00000;"></div>
<div class="a" style="left:1290px;top:1017px;width:378px;height:6px;background:#f4f4f4;"></div>
<div class="a" style="left:1290px;top:1023px;width:378px;height:45.5px;background:#f0f0f0;border-top:1px solid #dedede;border-bottom:1px solid #dadada;"></div>
<span class="t " style="left:1295px;top:1021.8px;font-size:9.26px;letter-spacing:0.000px;">This property contains the name of the instance that will represent the selected visual</span>
<span class="t " style="left:1295px;top:1032.3px;font-size:9.20px;letter-spacing:-0.000px;">element in the visualization.</span>
<div class="a" style="left:1290px;top:1068.5px;width:378px;height:20px;background:#fdfdfd;"></div>
<div class="a" style="left:1290px;top:1068.5px;width:63px;height:19px;background:#ffffff;border:1px solid #b4b4b4;border-top:none;border-radius:0 0 3px 3px;"></div>
<svg class="a" style="left:1292.5px;top:1072px;" width="13.5" height="13.5" viewBox="0 0 16 16"><rect x="1.500" y="4.500" width="10" height="10" fill="#ddd" stroke="#333" stroke-width="1.300"/><path d="M1.500 4.500l3-3h7l-1 3M11.500 4.500v-3" fill="#bbb" stroke="#333"/><path d="M4 8v5M6.500 10v3M9 7v6" stroke="#333" stroke-width="1.200"/><rect x="12" y="0" width="2.500" height="5" fill="#1a2ab0"/></svg>
<span class="t " style="left:1308.5px;top:1071px;font-size:8.67px;letter-spacing:0.000px;">Properties</span>
<svg class="a" style="left:1355px;top:1072px;" width="12.5" height="12.5" viewBox="0 0 16 16"><path d="M4.500 1.500h7.500l3 3v10.500h-10.500z" fill="#fff" stroke="#222" stroke-width="1.100"/><path d="M12 1.500v3h3" fill="#e8e8e8" stroke="#222" stroke-width=".9"/><path d="M11.500 6v7M13 6v7" stroke="#ccc" stroke-width=".7"/><rect x="4.500" y="2.800" width="5" height="5" fill="#d81818" stroke="#700" stroke-width=".6"/><rect x="5.800" y="4.100" width="2.400" height="2.400" fill="#f8e030"/><rect x=".6" y="7.600" width="5" height="5" fill="#28b028" stroke="#0a600a" stroke-width=".6"/><rect x="1.900" y="8.900" width="2.400" height="2.400" fill="#f0f060"/><rect x="5.400" y="7.800" width="3.200" height="4.800" fill="#e8188c"/><rect x="8.300" y="7.800" width="2.600" height="4.800" fill="#2838d8"/></svg>
<span class="t " style="left:1371px;top:1071px;font-size:8.65px;letter-spacing:-0.023px;color:#808080;">Visualization Toolbox</span>
<div class="a" style="left:0px;top:1088.5px;width:1668px;height:17.5px;background:#f8f8f8;"></div>
<div class="a" style="left:2px;top:1090px;width:262px;height:16.5px;background:#f2f2f2;border:1px solid #8c8c8c;border-bottom:none;border-radius:3px 3px 0 0;"></div>
<svg class="a" style="left:6.5px;top:1093px;" width="9" height="10" viewBox="0 0 9 10"><rect x=".6" y=".6" width="7.800" height="8.800" fill="#fff" stroke="#222" stroke-width="1.200"/><rect x="1" y="1" width="7" height="2.500" fill="#1a2a90"/><path d="M2 6h4" stroke="#888"/></svg>
<span class="t " style="left:23.5px;top:1090.3px;font-size:9.28px;letter-spacing:-0.000px;color:#555;">Messages - Total 2 error(s), 1 warning(s), 204 message(s)</span>
<div class="a" style="left:0px;top:1106px;width:1668px;height:17.5px;background:#f0f0f0;border-top:1px solid #e4e4e4;"></div>
<div class="a" style="left:994.5px;top:1108px;width:1px;height:14px;background:#d6d6d6;"></div>
<div class="a" style="left:1190px;top:1108px;width:1px;height:14px;background:#d6d6d6;"></div>
<div class="a" style="left:1208.5px;top:1108px;width:1px;height:14px;background:#d6d6d6;"></div>
<div class="a" style="left:1420px;top:1108px;width:1px;height:14px;background:#d6d6d6;"></div>
<div class="a" style="left:1440px;top:1108px;width:1px;height:14px;background:#d6d6d6;"></div>
<div class="a" style="left:1633px;top:1108px;width:1px;height:14px;background:#d6d6d6;"></div>
<div class="a" style="left:1653px;top:1108px;width:1px;height:14px;background:#d6d6d6;"></div>
<span class="t " style="left:1060px;top:1108.2px;font-size:8.86px;letter-spacing:0.000px;">X : 1196, Y : 122</span>
<svg class="a" style="left:1193px;top:1110px;" width="13" height="10" viewBox="0 0 13 10"><path d="M3.500 8.500q-3 0-3-2.500t2.500-2.500q.5-3 3.500-3t3.500 3q2.500 0 2.500 2.500t-3 2.500z" fill="#fff" stroke="#d02040" stroke-width="1"/><path d="M3.500 5l2.500 2.500M6 5l-2.500 2.500M7.500 5l2 2.500M9.500 5l-2 2.500" stroke="#d02040" stroke-width=".8"/></svg>
<span class="t " style="left:1234px;top:1107.8px;font-size:8.74px;letter-spacing:-0.075px;">Last build:</span>
<svg class="a" style="left:1278.5px;top:1111px;" width="9.5" height="9.5" viewBox="0 0 10 10"><circle cx="5" cy="5" r="4.600" fill="#e01020"/><path d="M3.200 3.200l3.600 3.600M6.800 3.200l-3.600 3.600" stroke="#fff" stroke-width="1.500"/></svg>
<span class="t " style="left:1292.8px;top:1107.8px;font-size:9.8px;font-weight:bold;">1</span>
<svg class="a" style="left:1303px;top:1111px;" width="9.5" height="9.5" viewBox="0 0 10 10"><circle cx="5" cy="5" r="4.500" fill="#f0e010" stroke="#777" stroke-width=".7"/><circle cx="5" cy="3.800" r="1.300" fill="#111"/><path d="M5 4v4" stroke="#111" stroke-width="1"/></svg>
<span class="t " style="left:1317px;top:1107.8px;font-size:9.8px;font-weight:bold;">1</span>
<span class="t " style="left:1340px;top:1107.8px;font-size:8.74px;letter-spacing:-0.220px;">Precompile</span>
<svg class="a" style="left:1387px;top:1111px;" width="9.5" height="9.5" viewBox="0 0 10 10"><circle cx="5" cy="5" r="4.600" fill="#e01020"/><path d="M3.200 3.200l3.600 3.600M6.800 3.200l-3.600 3.600" stroke="#fff" stroke-width="1.500"/></svg>
<svg class="a" style="left:1423.5px;top:1108.5px;" width="14" height="14" viewBox="0 0 16 16"><circle cx="6" cy="6" r="3.600" fill="none" stroke="#8088c8" stroke-width="2.600"/><circle cx="6" cy="6" r="5" fill="none" stroke="#70789c" stroke-width="1.100" stroke-dasharray="1.700 1.400"/><circle cx="12.500" cy="3" r="2.200" fill="#20c020"/><rect x="7.500" y="8.500" width="7" height="7" rx="1" fill="#6a8ab0" stroke="#223" stroke-width="1"/><rect x="9.500" y="10.500" width="3" height="3" fill="#cde"/></svg>
<span class="t " style="left:1491.5px;top:1108.2px;font-size:9.50px;letter-spacing:0.000px;">Project user: (nobody)</span>
<svg class="a" style="left:1637.5px;top:1108.5px;" width="11" height="13" viewBox="0 0 11 13"><path d="M5.500 .5q2.500 1.500 5 1.500 0 7-5 10.500-5-3.500-5-10.500 2.500 0 5-1.500z" fill="#c8c8d8" stroke="#556" stroke-width=".9"/><path d="M5.500 1.500v10M1 6h9" stroke="#fff" stroke-width=".5"/><path d="M5.500 1.500q2 1 4 1.200 0 2-.4 3.300h-3.600z" fill="#e8d040"/><path d="M5.500 6h-3.600q.8 3 3.600 5.200z" fill="#e8d040"/></svg>
<svg class="a" style="left:1656.5px;top:1113.5px;" width="9" height="9" viewBox="0 0 9 9"><path d="M7 1h1.500M4 4h1.500M7 4h1.500M1 7h1.500M4 7h1.500M7 7h1.500" stroke="#b0b0b0" stroke-width="1.500"/></svg>
<div class="a" style="left:262px;top:85px;width:1025px;height:1003px;border:1px solid #a6a6a6;"></div>
<div class="a" style="left:0px;top:0px;width:1668px;height:1px;background:#4a5670;"></div>
<div class="a" style="left:0px;top:0px;width:1px;height:1125px;background:linear-gradient(#3c4a66 0px,#3c4a66 10px,#5c3c38 30px,#5a5250 90px,#5a5a5a 150px,#5a5a5a 1000px,#2a3450 1100px);"></div>
<div class="a" style="left:1667px;top:1px;width:1px;height:1122px;background:#6a6a6a;"></div>
<div class="a" style="left:0px;top:1123px;width:1668px;height:2px;background:#1c2a48;"></div>
</body></html>
